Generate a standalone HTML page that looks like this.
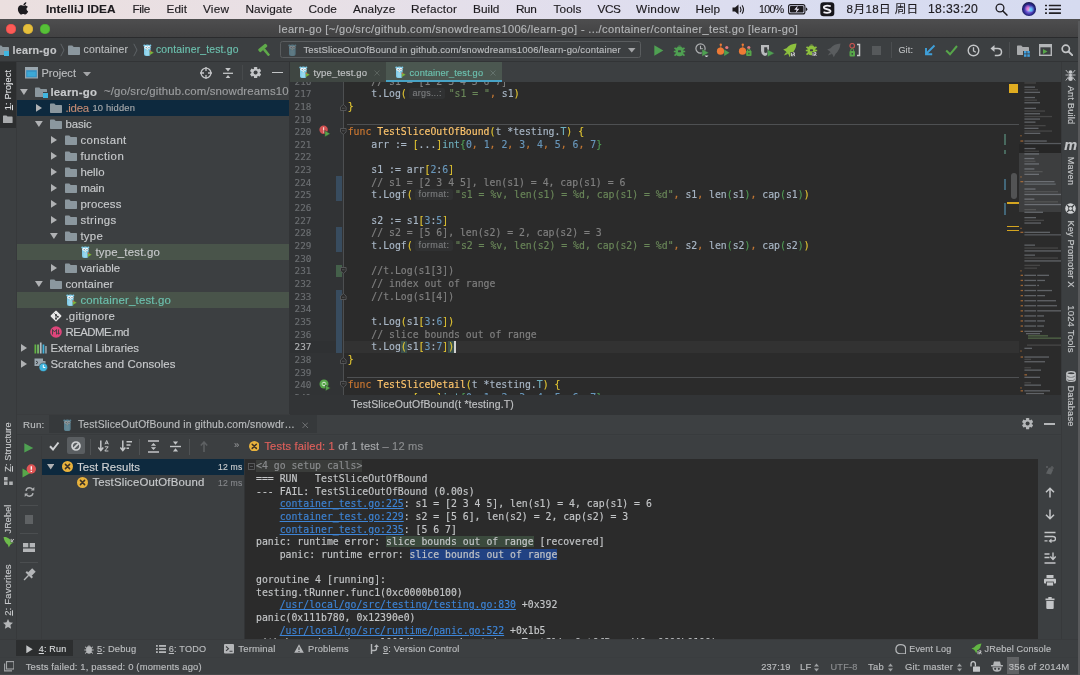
<!DOCTYPE html>
<html lang="en"><head><meta charset="utf-8"><title>learn-go - container_test.go</title>
<style>
html,body{margin:0;padding:0;}
body{width:1080px;height:675px;overflow:hidden;position:relative;background:#3c3f41;font-family:'Liberation Sans', 'Noto Sans CJK SC', sans-serif;-webkit-font-smoothing:antialiased;}
#app{position:absolute;left:0;top:0;width:1080px;height:675px;overflow:hidden;will-change:transform;}
#app div,#app span.t,#app svg{position:absolute;}
span.t{white-space:pre;-webkit-text-stroke:.15px currentColor;}
u{text-decoration:underline;text-underline-offset:1px;}
.lnk{color:#3d84d6;text-decoration:underline;}
</style></head><body><div id="app">
<div style="left:0px;top:0px;width:1080px;height:19px;background:linear-gradient(90deg,#ebdfdf 0%,#e8e0e6 30%,#e0deee 55%,#d8dcf0 80%,#d6dbf0 100%);"></div>
<svg style="left:17px;top:2px;" width="12" height="15" viewBox="0 0 12 15"><path d="M8.3 3.3c.6-.7 1-1.7.9-2.7-.9 0-1.9.6-2.5 1.300-.5.6-1 1.600-.9 2.600 1 .1 1.900-.5 2.500-1.200zM9.200 4.400c-1.400-.1-2.500.8-3.200.8s-1.700-.7-2.700-.7C1.800 4.500.6 5.300 0 6.600c-1.300 2.300-.3 5.700.900 7.500.6.900 1.400 1.900 2.300 1.900.900 0 1.300-.6 2.400-.6s1.400.6 2.400.6 1.600-.9 2.300-1.800c.7-1 1-2 1-2.100 0 0-1.900-.7-1.900-2.900 0-1.800 1.500-2.700 1.600-2.700-.9-1.300-2.200-1.400-2.700-1.500z" transform="translate(1.4,-0.3) scale(0.86,0.8)" fill="#1d1b1f"/></svg>
<span class="t" style="left:46px;top:1.90px;font-size:11.8px;line-height:15px;color:#1d1b1f;font-weight:700;letter-spacing:0.060px;">IntelliJ IDEA</span>
<span class="t" style="left:132.4px;top:1.90px;font-size:11.8px;line-height:15px;color:#1d1b1f;letter-spacing:-0.404px;">File</span>
<span class="t" style="left:166.6px;top:1.90px;font-size:11.8px;line-height:15px;color:#1d1b1f;letter-spacing:0.021px;">Edit</span>
<span class="t" style="left:203px;top:1.90px;font-size:11.8px;line-height:15px;color:#1d1b1f;letter-spacing:0.183px;">View</span>
<span class="t" style="left:245.4px;top:1.90px;font-size:11.8px;line-height:15px;color:#1d1b1f;letter-spacing:0.058px;">Navigate</span>
<span class="t" style="left:308.4px;top:1.90px;font-size:11.8px;line-height:15px;color:#1d1b1f;letter-spacing:0.113px;">Code</span>
<span class="t" style="left:353px;top:1.90px;font-size:11.8px;line-height:15px;color:#1d1b1f;letter-spacing:0.064px;">Analyze</span>
<span class="t" style="left:411px;top:1.90px;font-size:11.8px;line-height:15px;color:#1d1b1f;letter-spacing:0.188px;">Refactor</span>
<span class="t" style="left:473px;top:1.90px;font-size:11.8px;line-height:15px;color:#1d1b1f;letter-spacing:0.037px;">Build</span>
<span class="t" style="left:516px;top:1.90px;font-size:11.8px;line-height:15px;color:#1d1b1f;letter-spacing:-0.422px;">Run</span>
<span class="t" style="left:553.6px;top:1.90px;font-size:11.8px;line-height:15px;color:#1d1b1f;letter-spacing:0.056px;">Tools</span>
<span class="t" style="left:597.6px;top:1.90px;font-size:11.8px;line-height:15px;color:#1d1b1f;letter-spacing:-0.506px;">VCS</span>
<span class="t" style="left:636px;top:1.90px;font-size:11.8px;line-height:15px;color:#1d1b1f;letter-spacing:0.297px;">Window</span>
<span class="t" style="left:695.6px;top:1.90px;font-size:11.8px;line-height:15px;color:#1d1b1f;letter-spacing:0.038px;">Help</span>
<svg style="left:732px;top:3px;" width="15" height="13" viewBox="0 0 15 13"><path d="M0.500 4.500h2.500l3.500-3v10l-3.500-3h-2.500z" fill="#1d1b1f"/><path d="M8.300 4.200q1.300 2.300 0 4.600M10.300 2.700q2.300 3.800 0 7.600" fill="none" stroke="#1d1b1f" stroke-width="1.100" stroke-linecap="round"/></svg>
<span class="t" style="left:759px;top:2.40px;font-size:10.6px;line-height:14px;color:#1d1b1f;letter-spacing:-0.603px;">100%</span>
<svg style="left:788px;top:4px;" width="20" height="11" viewBox="0 0 20 11"><rect x="0.600" y="0.600" width="16.300" height="9.300" rx="2" fill="none" stroke="#1d1b1f" stroke-width="1.100"/><rect x="2" y="2" width="13.500" height="6.500" rx="0.800" fill="#1d1b1f"/><path d="M17.800 3.500v3.500q1.500-.3 1.500-1.750t-1.500-1.750z" fill="#1d1b1f"/><path d="M9.800 1.500l-3.600 4.200h2.400l-1 3.500 3.800-4.400h-2.500z" fill="#e4dfee"/></svg>
<svg style="left:820px;top:2px;" width="15" height="15" viewBox="0 0 15 15"><rect x="0.300" y="0.300" width="14" height="14" rx="3.200" fill="#17161b"/><path d="M10.800 4.300q-3.500-1.200-6.300-.1-1.400 1 0 2.200l5.300 1.700q1.600 1.100-.1 2.300-3.100.9-6.200-.3" fill="none" stroke="#f2f0f6" stroke-width="1.700"/></svg>
<span class="t" style="left:846.6px;top:1.00px;font-size:11.6px;line-height:15px;color:#1d1b1f;letter-spacing:0.380px;">8月18日 周日</span>
<span class="t" style="left:928px;top:1.40px;font-size:12.2px;line-height:16px;color:#1d1b1f;letter-spacing:0.340px;">18:33:20</span>
<svg style="left:995px;top:3px;" width="13" height="13" viewBox="0 0 13 13"><circle cx="5" cy="5" r="3.900" fill="none" stroke="#1d1b1f" stroke-width="1.300"/><path d="M7.900 7.900l4 4.200" stroke="#1d1b1f" stroke-width="1.500" stroke-linecap="round"/></svg>
<div style="left:1022px;top:2.300px;width:13.600px;height:13.600px;border-radius:50%;background:radial-gradient(circle at 50% 55%,#e8f6ff 0%,#8fb8f0 12%,#6a4fd0 30%,#2a2a8c 52%,#14123c 78%,#0c0b22 100%);"></div>
<div style="left:1024.500px;top:5px;width:5px;height:6px;border-radius:50%;background:radial-gradient(ellipse at 60% 60%,rgba(255,120,200,.9) 0%,rgba(255,120,200,.3) 55%,rgba(0,0,0,0) 100%);"></div>
<div style="left:1029px;top:5.500px;width:5px;height:6px;border-radius:50%;background:radial-gradient(ellipse at 40% 60%,rgba(90,220,255,.9) 0%,rgba(90,220,255,.3) 55%,rgba(0,0,0,0) 100%);"></div>
<svg style="left:1045px;top:4.3px;" width="17" height="11" viewBox="0 0 17 11"><g fill="#222024"><rect x="0" y="0.700" width="2" height="1.600" rx=".4"/><rect x="3.800" y="0.700" width="12.200" height="1.600" rx=".4"/><rect x="0" y="4.500" width="2" height="1.600" rx=".4"/><rect x="3.800" y="4.500" width="12.200" height="1.600" rx=".4"/><rect x="0" y="8.300" width="2" height="1.600" rx=".4"/><rect x="3.800" y="8.300" width="12.200" height="1.600" rx=".4"/></g></svg>
<div style="left:0px;top:19px;width:1080px;height:19px;background:linear-gradient(180deg,#4e4e4f 0%,#474748 50%,#424243 100%);"></div>
<div style="left:0px;top:37px;width:1080px;height:1px;background:#2a2b2d;"></div>
<div style="left:5.8px;top:23.5px;width:10.400px;height:10.400px;border-radius:50%;background:#fc5b57;box-shadow:inset 0 0 0 .5px #df4744;"></div>
<div style="left:22.6px;top:23.5px;width:10.400px;height:10.400px;border-radius:50%;background:#e5bf3c;box-shadow:inset 0 0 0 .5px #d1a730;"></div>
<div style="left:39.599999999999994px;top:23.5px;width:10.400px;height:10.400px;border-radius:50%;background:#57c038;box-shadow:inset 0 0 0 .5px #45a72c;"></div>
<span class="t" style="left:278.6px;top:22.30px;font-size:11px;line-height:14px;color:#b4b6b8;letter-spacing:0.366px;">learn-go [~/go/src/github.com/snowdreams1006/learn-go] - .../container/container_test.go [learn-go]</span>
<div style="left:0px;top:38px;width:1080px;height:23px;background:#3c3f41;"></div>
<div style="left:0px;top:61px;width:1080px;height:1px;background:#323436;"></div>
<svg style="left:-3px;top:44.5px;" width="12" height="10" viewBox="0 0 12 10"><path d="M0 1.200q0-.7.700-.7h3.600l1.400 1.500h5.600q.7 0 .700.700v6.600q0 .7-.700.700h-10.600q-.7 0-.700-.7z" fill="#8b979e"/></svg>
<div style="left:3.6px;top:50.6px;width:5.6px;height:5.6px;background:#3c3f41;"></div>
<div style="left:4.4px;top:51.4px;width:4.8px;height:4.8px;background:#40b6e0;"></div>
<span class="t" style="left:12.6px;top:43.20px;font-size:10.76px;line-height:14px;color:#c4c6c8;font-weight:700;letter-spacing:0.206px;">learn-go</span>
<svg style="left:60px;top:43.2px;" width="5" height="14" viewBox="0 0 5 14"><path d="M0.800 0.800l3.200 6.200-3.200 6.200" fill="none" stroke="#5e6366" stroke-width="1"/></svg>
<svg style="left:68px;top:44.5px;" width="12" height="10" viewBox="0 0 12 10"><path d="M0 1.200q0-.7.700-.7h3.600l1.400 1.500h5.600q.7 0 .700.700v6.600q0 .7-.700.700h-10.600q-.7 0-.700-.7z" fill="#8b979e"/></svg>
<span class="t" style="left:83.6px;top:43.20px;font-size:10.41px;line-height:14px;color:#bbbdbf;letter-spacing:0.185px;">container</span>
<svg style="left:133px;top:43.2px;" width="5" height="14" viewBox="0 0 5 14"><path d="M0.800 0.800l3.200 6.200-3.200 6.200" fill="none" stroke="#5e6366" stroke-width="1"/></svg>
<svg style="left:142.5px;top:43.5px;" width="11.5" height="12.5" viewBox="0 0 11.5 12.5"><g opacity="1.0"><path d="M1 3.600q0-3.100 3.300-3.100t3.300 3.100v6.300q0 2.200-3.300 2.200t-3.300-2.200z" fill="#7fcbe8"/><circle cx="1.300" cy="1.500" r="1" fill="#7fcbe8"/><circle cx="7.300" cy="1.500" r="1" fill="#7fcbe8"/><circle cx="2.900" cy="3.300" r="1.500" fill="#f4f8fa"/><circle cx="5.700" cy="3.300" r="1.500" fill="#f4f8fa"/><circle cx="3.200" cy="3.500" r=".5" fill="#3a5560"/><circle cx="6" cy="3.500" r=".5" fill="#3a5560"/><rect x="3.600" y="4.700" width="1.400" height="1.500" rx=".5" fill="#f0e6d0"/><path d="M2.400 6.500h3.800v4.500q-1.900.8-3.800 0z" fill="#a6e0f2" opacity=".6"/></g><path d="M6.800 6.300l4 2.400-4 2.400z" fill="#7cb83c" stroke="#4e5a3a" stroke-width=".3"/><path d="M6.800 6.300l1.500.9-1.500 1z" fill="#e2574c"/></svg>
<span class="t" style="left:156px;top:43.20px;font-size:10.39px;line-height:14px;color:#6cc0ae;letter-spacing:0.175px;">container_test.go</span>
<svg style="left:256.5px;top:42.5px;" width="15" height="14" viewBox="0 0 15 14"><g transform="rotate(-40 7.500 7)"><rect x="2.500" y="2.500" width="10" height="3.600" rx="1" fill="#5faa4a"/><rect x="6.300" y="5.800" width="2.500" height="8.500" rx=".8" fill="#5faa4a"/></g></svg>
<div style="left:280px;top:40.500px;width:361px;height:17.500px;border:1px solid #5a5d5f;border-radius:2.500px;box-sizing:border-box;background:#3c3f41;"></div>
<svg style="left:288px;top:43.5px;" width="11.5" height="12.5" viewBox="0 0 11.5 12.5"><g opacity="0.38"><path d="M1 3.600q0-3.100 3.300-3.100t3.300 3.100v6.300q0 2.200-3.300 2.200t-3.300-2.200z" fill="#7fcbe8"/><circle cx="1.300" cy="1.500" r="1" fill="#7fcbe8"/><circle cx="7.300" cy="1.500" r="1" fill="#7fcbe8"/><circle cx="2.900" cy="3.300" r="1.500" fill="#f4f8fa"/><circle cx="5.700" cy="3.300" r="1.500" fill="#f4f8fa"/><circle cx="3.200" cy="3.500" r=".5" fill="#3a5560"/><circle cx="6" cy="3.500" r=".5" fill="#3a5560"/><rect x="3.600" y="4.700" width="1.400" height="1.500" rx=".5" fill="#f0e6d0"/><path d="M2.400 6.500h3.800v4.500q-1.900.8-3.800 0z" fill="#a6e0f2" opacity=".6"/></g></svg>
<span class="t" style="left:303.4px;top:43.20px;font-size:9.49px;line-height:14px;color:#bbbdbf;letter-spacing:0.167px;">TestSliceOutOfBound in github.com/snowdreams1006/learn-go/container</span>
<svg style="left:628px;top:48.2px;" width="7.5" height="4.6" viewBox="0 0 7.5 4.6"><path d="M0 0h7.5l-3.75 4.6z" fill="#a3a5a7"/></svg>
<svg style="left:653.5px;top:45px;" width="10" height="11" viewBox="0 0 10 11"><path d="M0.300 0.300l9 5.200-9 5.200z" fill="#4fa052"/></svg>
<svg style="left:673.2px;top:43.5px;" width="13.0" height="13.0" viewBox="0 0 13 13"><g fill="#4fa052"><rect x="2.600" y="2.800" width="7.800" height="9.400" rx="3.600"/><path d="M4.200 2.600q2.300-2.400 4.600 0z"/></g><g stroke="#4fa052" stroke-width="1.700" fill="none"><path d="M0.800 7.500h11.400M1.500 3.800l2 1.600M11.500 3.800l-2 1.600M1.500 11.600l2-1.600M11.500 11.600l-2-1.600"/></g><rect x="5" y="6.300" width="3" height="2" rx=".4" fill="#3c3f41"/></svg>
<svg style="left:695px;top:43px;" width="15" height="14" viewBox="0 0 15 14"><circle cx="5.500" cy="5.500" r="4.600" fill="none" stroke="#afb1b3" stroke-width="1.200"/><path d="M5.500 2.800v3h2.500" fill="none" stroke="#afb1b3" stroke-width="1.100"/><path d="M7 6l7 3.800-7 3.800z" fill="#4fa052" stroke="#3c3f41" stroke-width=".5"/><path d="M9.500 12.500h4l-2 2z" fill="#d0d2d4"/></svg>
<svg style="left:716px;top:43px;" width="14" height="14" viewBox="0 0 14 14"><circle cx="4.500" cy="8.200" r="3.600" fill="#ee7a35"/><circle cx="4.800" cy="1.800" r="1.200" fill="#ee7a35"/><path d="M4.800 2.500v2.500" stroke="#ee7a35" stroke-width=".8"/><circle cx="10.800" cy="4.500" r="1.600" fill="#e2777a"/><path d="M8.200 6.500l5.300 3.200-5.300 3.200z" fill="#4fa052"/></svg>
<svg style="left:738px;top:43px;" width="14" height="14" viewBox="0 0 14 14"><circle cx="4.500" cy="8.200" r="3.600" fill="#ee7a35"/><circle cx="4.800" cy="1.800" r="1.200" fill="#ee7a35"/><path d="M4.800 2.500v2.500" stroke="#ee7a35" stroke-width=".8"/><circle cx="10.800" cy="4.500" r="1.600" fill="#e2777a"/><rect x="8.200" y="7.800" width="5.300" height="5.200" rx=".8" fill="#57a64a"/><path d="M9.500 8v-1.200q1.350-1.500 2.700 0v1.200" fill="none" stroke="#57a64a" stroke-width="1"/><rect x="10.300" y="9.800" width="1.200" height="1.500" fill="#3c3f41"/></svg>
<svg style="left:760px;top:43.5px;" width="15" height="13" viewBox="0 0 15 13"><path d="M1 1h8v6q0 3.500-4 5-4-1.500-4-5z" fill="#b8babc"/><path d="M4.200 3.200h3v5q-1.500 1.500-3 0z" fill="#3c3f41"/><path d="M7.500 5.500l7 3.700-7 3.700z" fill="#4fa052" stroke="#3c3f41" stroke-width=".5"/></svg>
<svg style="left:783px;top:43px;" width="14" height="14" viewBox="0 0 14 14"><path d="M13.500 0.500q-6.500 .3-10 4.800l-3.300 1.200 2.800 2 .8 1.800 1.600 1 1.400 3 1.800-3.500q4.300-3.800 4.900-10.300z" fill="#8dc03e"/><path d="M0.800 12.500l2.300-3.300 1.700 1.700z" fill="#8dc03e"/><rect x="7.500" y="9" width="6" height="5" fill="#3c3f41"/><path d="M8.500 9.800v3.400M9.800 9.800h1.600v1.500h-1.600v2M11.800 13.200l-.9-1.900" stroke="#e6e6e6" stroke-width=".8" fill="none"/></svg>
<svg style="left:804.5px;top:42.5px;" width="13.0" height="13.0" viewBox="0 0 13 13"><g fill="#8dc03e"><rect x="2.600" y="2.800" width="7.800" height="9.400" rx="3.600"/><path d="M4.200 2.600q2.300-2.400 4.600 0z"/></g><g stroke="#8dc03e" stroke-width="1.700" fill="none"><path d="M0.800 7.500h11.400M1.500 3.800l2 1.600M11.500 3.800l-2 1.600M1.500 11.600l2-1.600M11.500 11.600l-2-1.600"/></g><rect x="5" y="6.300" width="3" height="2" rx=".4" fill="#3c3f41"/></svg>
<div style="left:812px;top:52px;width:6px;height:5px;background:#3c3f41;"></div>
<svg style="left:812px;top:52px;" width="6" height="5" viewBox="0 0 6 5"><path d="M1 .5v3.400M2.300 .5h1.600v1.500h-1.600v2M4.300 4l-.9-1.900" stroke="#e6e6e6" stroke-width=".8" fill="none"/></svg>
<svg style="left:827px;top:43px;" width="14" height="14" viewBox="0 0 14 14"><path d="M13.500 0.500q-6.500 .3-10 4.800l-3.300 1.200 2.800 2 .8 1.800 1.600 1 1.400 3 1.800-3.500q4.300-3.800 4.900-10.300z" fill="#5a5d5f"/><path d="M0.800 12.500l2.300-3.300 1.700 1.700z" fill="#5a5d5f"/></svg>
<svg style="left:849px;top:43px;" width="12" height="14" viewBox="0 0 12 14"><circle cx="3.200" cy="2.800" r="2.300" fill="none" stroke="#c75450" stroke-width="1.200"/><rect x="0.500" y="8" width="5.500" height="5.500" rx="1" fill="#57a64a"/><path d="M1.800 8v-1.500q1.400-1.600 2.800 0v1.500" fill="none" stroke="#57a64a" stroke-width="1"/><rect x="2.600" y="10" width="1.300" height="1.700" fill="#3c3f41"/><path d="M8 1.500h2.500v11h-2.500" fill="none" stroke="#c9cbcd" stroke-width="1.500"/></svg>
<div style="left:872px;top:45.5px;width:9px;height:9px;background:#56595b;"></div>
<div style="left:890.5px;top:42px;width:1px;height:16px;background:#4b4e50;"></div>
<span class="t" style="left:898.4px;top:43.20px;font-size:9.05px;line-height:14px;color:#bbbdbf;letter-spacing:0.147px;">Git:</span>
<svg style="left:924px;top:44px;" width="12" height="12" viewBox="0 0 12 12"><path d="M10.500 1.500l-8 8M2 4v6.200h6.200" fill="none" stroke="#3f9fd8" stroke-width="1.900"/></svg>
<svg style="left:945px;top:44px;" width="13" height="12" viewBox="0 0 13 12"><path d="M1.200 6.500l3.800 3.800 7-8.300" fill="none" stroke="#57a64a" stroke-width="2"/></svg>
<svg style="left:966.5px;top:43.5px;" width="13" height="13" viewBox="0 0 13 13"><circle cx="6.500" cy="6.500" r="5.300" fill="none" stroke="#c3c5c7" stroke-width="1.400"/><path d="M6.500 3.300v3.500l2.300 1.400" fill="none" stroke="#c3c5c7" stroke-width="1.300"/></svg>
<svg style="left:989.5px;top:43.5px;" width="13" height="13" viewBox="0 0 13 13"><path d="M3 4.500h4.800q3.700 0 3.700 3.500t-3.700 3.500h-3" fill="none" stroke="#c3c5c7" stroke-width="1.500"/><path d="M0.500 4.500l4-3.500v7z" fill="#c3c5c7"/></svg>
<div style="left:1008.5px;top:42px;width:1px;height:16px;background:#4b4e50;"></div>
<svg style="left:1016.5px;top:44.5px;" width="12" height="10" viewBox="0 0 12 10"><path d="M0 1.200q0-.7.700-.7h3.600l1.400 1.500h5.600q.7 0 .700.700v6.600q0 .7-.700.700h-10.600q-.7 0-.700-.7z" fill="#a9abad"/></svg>
<div style="left:1023px;top:50.5px;width:7px;height:7px;background:#3c3f41;"></div>
<svg style="left:1023.5px;top:51px;" width="6" height="6" viewBox="0 0 6 6"><rect x="0" y="0" width="2.500" height="2.500" fill="#40a0e0"/><rect x="3.300" y="0" width="2.500" height="2.500" fill="#40a0e0"/><rect x="0" y="3.300" width="2.500" height="2.500" fill="#40a0e0"/><rect x="3.300" y="3.300" width="2.500" height="2.500" fill="#40a0e0"/></svg>
<svg style="left:1038.5px;top:44px;" width="13" height="12" viewBox="0 0 13 12"><rect x="0.700" y="0.700" width="11.600" height="10.600" fill="none" stroke="#b4b6b8" stroke-width="1.400"/><rect x="0.700" y="0.700" width="11.600" height="2.600" fill="#b4b6b8"/><path d="M4 5l4.500 2.500-4.500 2.500z" fill="#57a64a"/></svg>
<svg style="left:1061px;top:44px;" width="12" height="12" viewBox="0 0 12 12"><circle cx="4.800" cy="4.800" r="3.600" fill="none" stroke="#c3c5c7" stroke-width="1.700"/><path d="M7.500 7.500l3.700 3.700" stroke="#c3c5c7" stroke-width="1.900" stroke-linecap="round"/></svg>
<div style="left:0px;top:62px;width:16px;height:577px;background:#3c3f41;"></div>
<div style="left:16px;top:62px;width:1px;height:577px;background:#37393b;"></div>
<div style="left:0px;top:62px;width:16px;height:66px;background:#2c2e2f;"></div>
<span class="t" style="left:8px;top:89.8px;font-size:9.23px;line-height:14px;color:#dcdee0;letter-spacing:0.148px;transform:translate(-50%,-50%) rotate(-90deg);"><u>1</u>: Project</span>
<svg style="left:3.2px;top:114.5px;" width="9.6" height="8" viewBox="0 0 12 10"><path d="M0 1.200q0-.7.700-.7h3.600l1.400 1.500h5.600q.7 0 .700.700v6.600q0 .7-.700.700h-10.600q-.7 0-.700-.7z" fill="#a9abad"/></svg>
<span class="t" style="left:8px;top:447.3px;font-size:9.12px;line-height:14px;color:#c6c8ca;letter-spacing:0.152px;transform:translate(-50%,-50%) rotate(-90deg);"><u>Z</u>: Structure</span>
<svg style="left:3.5px;top:477px;" width="9" height="8" viewBox="0 0 9 8"><rect x="0" y="4.500" width="3.600" height="3.500" fill="#afb1b3"/><rect x="5.200" y="4.500" width="3.600" height="3.500" fill="#afb1b3"/><rect x="0" y="0" width="3.600" height="3.500" fill="#afb1b3"/></svg>
<span class="t" style="left:8px;top:519px;font-size:8.96px;line-height:14px;color:#c6c8ca;letter-spacing:0.181px;transform:translate(-50%,-50%) rotate(-90deg);">JRebel</span>
<svg style="left:2.5px;top:535.5px;" width="12" height="12" viewBox="0 0 12 12"><g transform="rotate(-90 6 6)"><path d="M11.500 0.500q-5.500 .5-8.200 4.400l-2.800.9 2.800 1.500 1.100 1.400 1.300 2.600 1.300-2.800q3.900-3 4.500-8z" fill="#6dbb4b"/><path d="M5.500 7.500h5v4h-5z" fill="#3c3f41"/><path d="M6.300 8.200h2.800M6.300 9.400h1.400l1 1.600M6.300 9.400v-1.200" stroke="#e6e6e6" stroke-width=".8" fill="none"/></g></svg>
<span class="t" style="left:8px;top:590px;font-size:9.49px;line-height:14px;color:#c6c8ca;letter-spacing:0.158px;transform:translate(-50%,-50%) rotate(-90deg);"><u>2</u>: Favorites</span>
<svg style="left:3px;top:618.5px;" width="10" height="10" viewBox="0 0 10 10"><path d="M5 0l1.500 3.300 3.500.4-2.600 2.400.7 3.600-3.100-1.800-3.100 1.800.7-3.600-2.600-2.400 3.500-.4z" fill="#b4b6b8"/></svg>
<div style="left:17px;top:62px;width:272px;height:352.5px;background:#3c3f41;"></div>
<div style="left:289px;top:62px;width:1px;height:352.5px;background:#323436;"></div>
<svg style="left:25px;top:67px;" width="13" height="11.5" viewBox="0 0 13 11.5"><rect x="0.600" y="0.600" width="11.800" height="10.300" fill="#3592c4" stroke="#9aa7b0" stroke-width="1.200"/><rect x="0.600" y="0.600" width="11.800" height="2.600" fill="#9aa7b0"/><rect x="2.300" y="4.800" width="8.400" height="4.600" fill="#40b6e0" opacity=".65"/></svg>
<span class="t" style="left:41.4px;top:66.40px;font-size:11px;line-height:14px;color:#bbbdbf;letter-spacing:0.054px;">Project</span>
<svg style="left:83px;top:71.7px;" width="8" height="4.6" viewBox="0 0 8 4.6"><path d="M0 0h8l-4.0 4.6z" fill="#a3a5a7"/></svg>
<svg style="left:200px;top:66.7px;" width="12" height="12" viewBox="0 0 12 12"><circle cx="6" cy="6" r="4.900" fill="none" stroke="#c3c5c7" stroke-width="1.300"/><path d="M6 0v4M6 8v4M0 6h4M8 6h4" stroke="#c3c5c7" stroke-width="1.300"/></svg>
<svg style="left:223px;top:67.5px;" width="10" height="10.6" viewBox="0 0 10 10.6"><path d="M0 5.300h10" stroke="#c3c5c7" stroke-width="1.300"/><path d="M2.200 0h5.600l-2.800 3.600zM2.200 10.600h5.600l-2.800-3.600z" fill="#c3c5c7"/></svg>
<div style="left:241.5px;top:65px;width:1px;height:15px;background:#474a4c;"></div>
<svg style="left:249.9px;top:67.0px;" width="11.2" height="11.2" viewBox="0 0 11.2 11.2"><g transform="translate(5.6,5.6)" fill="#c3c5c7"><rect x="-1.600" y="-5.6" width="3.200" height="11.2" rx=".5" transform="rotate(0)"/><rect x="-1.600" y="-5.6" width="3.200" height="11.2" rx=".5" transform="rotate(60)"/><rect x="-1.600" y="-5.6" width="3.200" height="11.2" rx=".5" transform="rotate(120)"/><circle r="4.144"/></g><circle cx="5.6" cy="5.6" r="2.016" fill="#3c3f41"/></svg>
<div style="left:272px;top:71.7px;width:11px;height:1.5px;background:#c3c5c7;"></div>
<div style="left:17px;top:100px;width:272px;height:16px;background:#0d293e;"></div>
<div style="left:17px;top:244px;width:272px;height:16px;background:#49544a;"></div>
<div style="left:17px;top:292px;width:272px;height:16px;background:#49544a;"></div>
<svg style="left:19.8px;top:89.2px;" width="7.8" height="6" viewBox="0 0 7.8 6"><path d="M0 0h7.8l-3.9 6z" fill="#b0b2b4"/></svg>
<svg style="left:35px;top:86.8px;" width="12" height="10" viewBox="0 0 12 10"><path d="M0 1.200q0-.7.700-.7h3.600l1.400 1.500h5.600q.7 0 .700.700v6.600q0 .7-.700.700h-10.600q-.7 0-.700-.7z" fill="#8b979e"/></svg>
<div style="left:42.5px;top:92.3px;width:5.5px;height:5.5px;background:#3c3f41;"></div>
<div style="left:43.3px;top:93.1px;width:4.7px;height:4.7px;background:#40b6e0;"></div>
<span class="t" style="left:50.4px;top:84.70px;font-size:11.4px;line-height:15px;color:#c8cacc;font-weight:700;letter-spacing:0.222px;">learn-go</span>
<span class="t" style="left:104px;top:84.30px;font-size:11.4px;line-height:15px;color:#9c9ea0;letter-spacing:0.142px;">~/go/src/github.com/snowdreams10</span>
<svg style="left:35.5px;top:104.3px;" width="6" height="7.8" viewBox="0 0 6 7.8"><path d="M0 0l6 3.9-6 3.9z" fill="#b0b2b4"/></svg>
<svg style="left:50px;top:102.8px;" width="12" height="10" viewBox="0 0 12 10"><path d="M0 1.200q0-.7.700-.7h3.600l1.400 1.500h5.600q.7 0 .700.700v6.600q0 .7-.700.700h-10.600q-.7 0-.700-.7z" fill="#8b979e"/></svg>
<span class="t" style="left:65.4px;top:100.70px;font-size:11.4px;line-height:15px;color:#c28a72;letter-spacing:-0.245px;">.idea</span>
<span class="t" style="left:92.4px;top:101.20px;font-size:9.36px;line-height:14px;color:#a6a8aa;letter-spacing:0.173px;">10 hidden</span>
<svg style="left:34.8px;top:121.2px;" width="7.8" height="6" viewBox="0 0 7.8 6"><path d="M0 0h7.8l-3.9 6z" fill="#b0b2b4"/></svg>
<svg style="left:50px;top:118.8px;" width="12" height="10" viewBox="0 0 12 10"><path d="M0 1.200q0-.7.700-.7h3.600l1.400 1.500h5.600q.7 0 .700.700v6.600q0 .7-.700.700h-10.600q-.7 0-.700-.7z" fill="#8b979e"/></svg>
<span class="t" style="left:65.4px;top:116.70px;font-size:11.4px;line-height:15px;color:#c8cacc;letter-spacing:-0.065px;">basic</span>
<svg style="left:50.5px;top:136.29999999999998px;" width="6" height="7.8" viewBox="0 0 6 7.8"><path d="M0 0l6 3.9-6 3.9z" fill="#b0b2b4"/></svg>
<svg style="left:65px;top:134.8px;" width="12" height="10" viewBox="0 0 12 10"><path d="M0 1.200q0-.7.700-.7h3.600l1.400 1.500h5.600q.7 0 .700.700v6.600q0 .7-.700.700h-10.600q-.7 0-.700-.7z" fill="#8b979e"/></svg>
<span class="t" style="left:80.4px;top:132.70px;font-size:11.4px;line-height:15px;color:#c8cacc;letter-spacing:0.405px;">constant</span>
<svg style="left:50.5px;top:152.29999999999998px;" width="6" height="7.8" viewBox="0 0 6 7.8"><path d="M0 0l6 3.9-6 3.9z" fill="#b0b2b4"/></svg>
<svg style="left:65px;top:150.8px;" width="12" height="10" viewBox="0 0 12 10"><path d="M0 1.200q0-.7.700-.7h3.600l1.400 1.500h5.600q.7 0 .700.700v6.600q0 .7-.700.700h-10.600q-.7 0-.700-.7z" fill="#8b979e"/></svg>
<span class="t" style="left:80.4px;top:148.70px;font-size:11.4px;line-height:15px;color:#c8cacc;letter-spacing:0.492px;">function</span>
<svg style="left:50.5px;top:168.29999999999998px;" width="6" height="7.8" viewBox="0 0 6 7.8"><path d="M0 0l6 3.9-6 3.9z" fill="#b0b2b4"/></svg>
<svg style="left:65px;top:166.8px;" width="12" height="10" viewBox="0 0 12 10"><path d="M0 1.200q0-.7.700-.7h3.600l1.400 1.500h5.600q.7 0 .700.700v6.600q0 .7-.700.700h-10.600q-.7 0-.700-.7z" fill="#8b979e"/></svg>
<span class="t" style="left:80.4px;top:164.70px;font-size:11.4px;line-height:15px;color:#c8cacc;letter-spacing:0.005px;">hello</span>
<svg style="left:50.5px;top:184.29999999999998px;" width="6" height="7.8" viewBox="0 0 6 7.8"><path d="M0 0l6 3.9-6 3.9z" fill="#b0b2b4"/></svg>
<svg style="left:65px;top:182.8px;" width="12" height="10" viewBox="0 0 12 10"><path d="M0 1.200q0-.7.700-.7h3.600l1.400 1.500h5.600q.7 0 .700.700v6.600q0 .7-.700.700h-10.600q-.7 0-.700-.7z" fill="#8b979e"/></svg>
<span class="t" style="left:80.4px;top:180.70px;font-size:11.4px;line-height:15px;color:#c8cacc;letter-spacing:-0.172px;">main</span>
<svg style="left:50.5px;top:200.29999999999998px;" width="6" height="7.8" viewBox="0 0 6 7.8"><path d="M0 0l6 3.9-6 3.9z" fill="#b0b2b4"/></svg>
<svg style="left:65px;top:198.8px;" width="12" height="10" viewBox="0 0 12 10"><path d="M0 1.200q0-.7.700-.7h3.600l1.400 1.500h5.600q.7 0 .700.700v6.600q0 .7-.700.700h-10.600q-.7 0-.700-.7z" fill="#8b979e"/></svg>
<span class="t" style="left:80.4px;top:196.70px;font-size:11.4px;line-height:15px;color:#c8cacc;letter-spacing:0.186px;">process</span>
<svg style="left:50.5px;top:216.29999999999998px;" width="6" height="7.8" viewBox="0 0 6 7.8"><path d="M0 0l6 3.9-6 3.9z" fill="#b0b2b4"/></svg>
<svg style="left:65px;top:214.8px;" width="12" height="10" viewBox="0 0 12 10"><path d="M0 1.200q0-.7.700-.7h3.600l1.400 1.500h5.600q.7 0 .700.700v6.600q0 .7-.700.700h-10.600q-.7 0-.700-.7z" fill="#8b979e"/></svg>
<span class="t" style="left:80.4px;top:212.70px;font-size:11.4px;line-height:15px;color:#c8cacc;letter-spacing:0.390px;">strings</span>
<svg style="left:49.8px;top:233.2px;" width="7.8" height="6" viewBox="0 0 7.8 6"><path d="M0 0h7.8l-3.9 6z" fill="#b0b2b4"/></svg>
<svg style="left:65px;top:230.8px;" width="12" height="10" viewBox="0 0 12 10"><path d="M0 1.200q0-.7.700-.7h3.600l1.400 1.500h5.600q.7 0 .700.700v6.600q0 .7-.700.700h-10.600q-.7 0-.700-.7z" fill="#8b979e"/></svg>
<span class="t" style="left:80.4px;top:228.70px;font-size:11.4px;line-height:15px;color:#c8cacc;letter-spacing:0.305px;">type</span>
<svg style="left:81px;top:245.8px;" width="11.5" height="12.5" viewBox="0 0 11.5 12.5"><g opacity="1.0"><path d="M1 3.600q0-3.100 3.300-3.100t3.300 3.100v6.300q0 2.200-3.300 2.200t-3.300-2.200z" fill="#7fcbe8"/><circle cx="1.300" cy="1.500" r="1" fill="#7fcbe8"/><circle cx="7.300" cy="1.500" r="1" fill="#7fcbe8"/><circle cx="2.900" cy="3.300" r="1.500" fill="#f4f8fa"/><circle cx="5.700" cy="3.300" r="1.500" fill="#f4f8fa"/><circle cx="3.200" cy="3.500" r=".5" fill="#3a5560"/><circle cx="6" cy="3.500" r=".5" fill="#3a5560"/><rect x="3.600" y="4.700" width="1.400" height="1.500" rx=".5" fill="#f0e6d0"/><path d="M2.400 6.500h3.800v4.500q-1.900.8-3.800 0z" fill="#a6e0f2" opacity=".6"/></g><path d="M6.800 6.300l4 2.400-4 2.400z" fill="#7cb83c" stroke="#4e5a3a" stroke-width=".3"/><path d="M6.800 6.300l1.500.9-1.500 1z" fill="#e2574c"/></svg>
<span class="t" style="left:95.4px;top:244.70px;font-size:11.4px;line-height:15px;color:#c8cacc;letter-spacing:0.221px;">type_test.go</span>
<svg style="left:50.5px;top:264.3px;" width="6" height="7.8" viewBox="0 0 6 7.8"><path d="M0 0l6 3.9-6 3.9z" fill="#b0b2b4"/></svg>
<svg style="left:65px;top:262.8px;" width="12" height="10" viewBox="0 0 12 10"><path d="M0 1.200q0-.7.700-.7h3.600l1.400 1.500h5.600q.7 0 .700.700v6.600q0 .7-.700.700h-10.600q-.7 0-.700-.7z" fill="#8b979e"/></svg>
<span class="t" style="left:80.4px;top:260.70px;font-size:11.4px;line-height:15px;color:#c8cacc;letter-spacing:-0.039px;">variable</span>
<svg style="left:34.8px;top:281.2px;" width="7.8" height="6" viewBox="0 0 7.8 6"><path d="M0 0h7.8l-3.9 6z" fill="#b0b2b4"/></svg>
<svg style="left:50px;top:278.8px;" width="12" height="10" viewBox="0 0 12 10"><path d="M0 1.200q0-.7.700-.7h3.600l1.400 1.500h5.600q.7 0 .700.700v6.600q0 .7-.700.700h-10.600q-.7 0-.700-.7z" fill="#8b979e"/></svg>
<span class="t" style="left:65.4px;top:276.70px;font-size:11.4px;line-height:15px;color:#c8cacc;letter-spacing:0.146px;">container</span>
<svg style="left:66px;top:293.8px;" width="11.5" height="12.5" viewBox="0 0 11.5 12.5"><g opacity="1.0"><path d="M1 3.600q0-3.100 3.300-3.100t3.300 3.100v6.300q0 2.200-3.300 2.200t-3.300-2.200z" fill="#7fcbe8"/><circle cx="1.300" cy="1.500" r="1" fill="#7fcbe8"/><circle cx="7.300" cy="1.500" r="1" fill="#7fcbe8"/><circle cx="2.900" cy="3.300" r="1.500" fill="#f4f8fa"/><circle cx="5.700" cy="3.300" r="1.500" fill="#f4f8fa"/><circle cx="3.200" cy="3.500" r=".5" fill="#3a5560"/><circle cx="6" cy="3.500" r=".5" fill="#3a5560"/><rect x="3.600" y="4.700" width="1.400" height="1.500" rx=".5" fill="#f0e6d0"/><path d="M2.400 6.500h3.800v4.500q-1.900.8-3.800 0z" fill="#a6e0f2" opacity=".6"/></g><path d="M6.800 6.300l4 2.400-4 2.400z" fill="#7cb83c" stroke="#4e5a3a" stroke-width=".3"/><path d="M6.800 6.300l1.500.9-1.500 1z" fill="#e2574c"/></svg>
<span class="t" style="left:80.4px;top:292.70px;font-size:11.4px;line-height:15px;color:#6cc0ae;letter-spacing:0.195px;">container_test.go</span>
<svg style="left:49.5px;top:310px;" width="12" height="12" viewBox="0 0 12 12"><rect x="1.900" y="1.900" width="8.200" height="8.200" rx="1" transform="rotate(45 6 6)" fill="#e8e8e8"/><path d="M4.500 3.500l3.200 3.200M6 5v4" stroke="#3c3f41" stroke-width="1" fill="none"/><circle cx="6" cy="4.900" r="1" fill="#3c3f41"/><circle cx="7.800" cy="6.700" r="1" fill="#3c3f41"/><circle cx="6" cy="8.700" r="1" fill="#3c3f41"/></svg>
<span class="t" style="left:65.4px;top:308.70px;font-size:11.4px;line-height:15px;color:#c8cacc;letter-spacing:0.288px;">.gitignore</span>
<svg style="left:49.5px;top:326px;" width="12" height="12" viewBox="0 0 12 12"><circle cx="6" cy="6" r="5.800" fill="#e0457b"/><path d="M2.500 8.500v-5l2 2.500 2-2.500v5M8.500 3.500v4.500M7.300 6.800l1.200 1.500 1.200-1.500" fill="none" stroke="#3c3f41" stroke-width=".9"/></svg>
<span class="t" style="left:65.4px;top:324.70px;font-size:11.4px;line-height:15px;color:#c8cacc;letter-spacing:-0.486px;">README.md</span>
<svg style="left:20.5px;top:344.3px;" width="6" height="7.8" viewBox="0 0 6 7.8"><path d="M0 0l6 3.9-6 3.9z" fill="#b0b2b4"/></svg>
<svg style="left:34px;top:342px;" width="13" height="12" viewBox="0 0 13 12"><rect x="0.500" y="2.500" width="1.700" height="9" fill="#62b543"/><rect x="3.200" y="2.500" width="1.700" height="9" fill="#7cc06a"/><rect x="5.900" y="0.500" width="1.700" height="11" fill="#b4bcc2"/><rect x="8.600" y="2.500" width="1.700" height="9" fill="#40b6e0"/><rect x="11.200" y="4" width="1.500" height="7.500" fill="#9aa7b0"/></svg>
<span class="t" style="left:50.4px;top:340.70px;font-size:11.4px;line-height:15px;color:#c8cacc;letter-spacing:-0.002px;">External Libraries</span>
<svg style="left:20.5px;top:360.3px;" width="6" height="7.8" viewBox="0 0 6 7.8"><path d="M0 0l6 3.9-6 3.9z" fill="#b0b2b4"/></svg>
<svg style="left:34px;top:357.5px;" width="14" height="14" viewBox="0 0 14 14"><path d="M0.500 0.500h8.500v2.500h2.500v5h-11z" fill="#9aa7b0"/><path d="M2 3l2 1.500-2 1.500" fill="none" stroke="#3c3f41" stroke-width="1"/><circle cx="9.300" cy="9.300" r="4.300" fill="#40b6e0" stroke="#3c3f41" stroke-width=".6"/><path d="M9.300 6.800v2.700h2" fill="none" stroke="#ffffff" stroke-width="1"/></svg>
<span class="t" style="left:50.4px;top:356.70px;font-size:11.4px;line-height:15px;color:#c8cacc;letter-spacing:0.076px;">Scratches and Consoles</span>
<div style="left:290px;top:62px;width:771px;height:21px;background:#3c3f41;"></div>
<div style="left:290px;top:82px;width:771px;height:0.5px;background:#323436;"></div>
<div style="left:290px;top:62px;width:95.5px;height:20.5px;background:#3f4642;"></div>
<div style="left:385.5px;top:62px;width:116.5px;height:21px;background:#4b5750;"></div>
<div style="left:385.5px;top:79.8px;width:116.5px;height:3px;background:#48a3c6;"></div>
<svg style="left:299px;top:66.3px;" width="11.5" height="12.5" viewBox="0 0 11.5 12.5"><g opacity="1.0"><path d="M1 3.600q0-3.100 3.300-3.100t3.300 3.100v6.300q0 2.200-3.300 2.200t-3.300-2.200z" fill="#7fcbe8"/><circle cx="1.300" cy="1.500" r="1" fill="#7fcbe8"/><circle cx="7.300" cy="1.500" r="1" fill="#7fcbe8"/><circle cx="2.900" cy="3.300" r="1.500" fill="#f4f8fa"/><circle cx="5.700" cy="3.300" r="1.500" fill="#f4f8fa"/><circle cx="3.200" cy="3.500" r=".5" fill="#3a5560"/><circle cx="6" cy="3.500" r=".5" fill="#3a5560"/><rect x="3.600" y="4.700" width="1.400" height="1.500" rx=".5" fill="#f0e6d0"/><path d="M2.400 6.500h3.800v4.500q-1.900.8-3.800 0z" fill="#a6e0f2" opacity=".6"/></g><path d="M6.800 6.300l4 2.400-4 2.400z" fill="#7cb83c" stroke="#4e5a3a" stroke-width=".3"/><path d="M6.800 6.300l1.500.9-1.500 1z" fill="#e2574c"/></svg>
<span class="t" style="left:313.4px;top:65.80px;font-size:9.53px;line-height:14px;color:#c0c2c4;letter-spacing:0.163px;">type_test.go</span>
<svg style="left:373.5px;top:69.8px;" width="6" height="6" viewBox="0 0 6 6"><path d="M0.500 0.500l5 5M5.500 0.500l-5 5" stroke="#5d6561" stroke-width=".9"/></svg>
<svg style="left:395.3px;top:66.3px;" width="11.5" height="12.5" viewBox="0 0 11.5 12.5"><g opacity="1.0"><path d="M1 3.600q0-3.100 3.300-3.100t3.300 3.100v6.300q0 2.200-3.300 2.200t-3.300-2.200z" fill="#7fcbe8"/><circle cx="1.300" cy="1.500" r="1" fill="#7fcbe8"/><circle cx="7.300" cy="1.500" r="1" fill="#7fcbe8"/><circle cx="2.900" cy="3.300" r="1.500" fill="#f4f8fa"/><circle cx="5.700" cy="3.300" r="1.500" fill="#f4f8fa"/><circle cx="3.200" cy="3.500" r=".5" fill="#3a5560"/><circle cx="6" cy="3.500" r=".5" fill="#3a5560"/><rect x="3.600" y="4.700" width="1.400" height="1.500" rx=".5" fill="#f0e6d0"/><path d="M2.400 6.500h3.800v4.500q-1.900.8-3.800 0z" fill="#a6e0f2" opacity=".6"/></g><path d="M6.800 6.300l4 2.400-4 2.400z" fill="#7cb83c" stroke="#4e5a3a" stroke-width=".3"/><path d="M6.800 6.300l1.500.9-1.500 1z" fill="#e2574c"/></svg>
<span class="t" style="left:409.6px;top:65.80px;font-size:9.26px;line-height:14px;color:#6cc0ae;letter-spacing:0.155px;">container_test.go</span>
<svg style="left:489.5px;top:69.8px;" width="6" height="6" viewBox="0 0 6 6"><path d="M0.500 0.500l5 5M5.500 0.500l-5 5" stroke="#687570" stroke-width=".9"/></svg>
<div style="left:290px;top:82.3px;width:54px;height:312.7px;background:#313335;"></div>
<div style="left:344px;top:82.3px;width:675px;height:312.7px;background:#2b2b2b;"></div>
<div style="left:290px;top:340.692px;width:54px;height:12.656px;background:#2f3133;"></div>
<div style="left:344px;top:340.692px;width:661px;height:12.656px;background:#323232;"></div>
<div style="left:343.3px;top:82.3px;width:1px;height:312.7px;background:#4d4f51;"></div>
<div style="left:346.5px;top:124px;width:672.5px;height:1px;background:#4e5052;"></div>
<div style="left:346.5px;top:377px;width:672.5px;height:1px;background:#4e5052;"></div>
<div style="left:336.3px;top:176.16400000000002px;width:5.8px;height:25.312px;background:#384c5f;"></div>
<div style="left:336.3px;top:226.788px;width:5.8px;height:25.312px;background:#384c5f;"></div>
<div style="left:336.3px;top:264.75600000000003px;width:5.8px;height:12.656px;background:#44604a;"></div>
<div style="left:336.3px;top:290.06800000000004px;width:5.8px;height:63.28px;background:#384c5f;"></div>
<style>.c{font-family:'DejaVu Sans Mono', 'Liberation Mono', monospace;font-size:9.826px;line-height:11px;height:11px;color:#a9b7c6;}</style>
<div style="left:290px;top:82.300px;width:729px;height:312.700px;overflow:hidden;">
<div style="left:-290px;top:-82.300px;width:1080px;height:675px;">
<span class="t" style="left:294.6px;top:76.00px;font-size:9.3px;line-height:11px;color:#6c6f72;font-family:'DejaVu Sans Mono', 'Liberation Mono', monospace;letter-spacing:0.001px;">216</span>
<span class="t c" style="left:347.7px;top:76px;">    <span style="color:#808080">// s1 = [1 2 3 4 5 6 7]</span></span>
<span class="t" style="left:294.6px;top:88.00px;font-size:9.3px;line-height:11px;color:#6c6f72;font-family:'DejaVu Sans Mono', 'Liberation Mono', monospace;letter-spacing:0.001px;">217</span>
<span class="t" style="left:294.6px;top:101.00px;font-size:9.3px;line-height:11px;color:#6c6f72;font-family:'DejaVu Sans Mono', 'Liberation Mono', monospace;letter-spacing:0.001px;">218</span>
<span class="t" style="left:294.6px;top:114.00px;font-size:9.3px;line-height:11px;color:#6c6f72;font-family:'DejaVu Sans Mono', 'Liberation Mono', monospace;letter-spacing:0.001px;">219</span>
<span class="t" style="left:294.6px;top:126.00px;font-size:9.3px;line-height:11px;color:#6c6f72;font-family:'DejaVu Sans Mono', 'Liberation Mono', monospace;letter-spacing:0.001px;">220</span>
<span class="t" style="left:294.6px;top:139.00px;font-size:9.3px;line-height:11px;color:#6c6f72;font-family:'DejaVu Sans Mono', 'Liberation Mono', monospace;letter-spacing:0.001px;">221</span>
<span class="t" style="left:294.6px;top:151.00px;font-size:9.3px;line-height:11px;color:#6c6f72;font-family:'DejaVu Sans Mono', 'Liberation Mono', monospace;letter-spacing:0.001px;">222</span>
<span class="t" style="left:294.6px;top:164.00px;font-size:9.3px;line-height:11px;color:#6c6f72;font-family:'DejaVu Sans Mono', 'Liberation Mono', monospace;letter-spacing:0.001px;">223</span>
<span class="t" style="left:294.6px;top:177.00px;font-size:9.3px;line-height:11px;color:#6c6f72;font-family:'DejaVu Sans Mono', 'Liberation Mono', monospace;letter-spacing:0.001px;">224</span>
<span class="t" style="left:294.6px;top:189.00px;font-size:9.3px;line-height:11px;color:#6c6f72;font-family:'DejaVu Sans Mono', 'Liberation Mono', monospace;letter-spacing:0.001px;">225</span>
<span class="t" style="left:294.6px;top:202.00px;font-size:9.3px;line-height:11px;color:#6c6f72;font-family:'DejaVu Sans Mono', 'Liberation Mono', monospace;letter-spacing:0.001px;">226</span>
<span class="t" style="left:294.6px;top:215.00px;font-size:9.3px;line-height:11px;color:#6c6f72;font-family:'DejaVu Sans Mono', 'Liberation Mono', monospace;letter-spacing:0.001px;">227</span>
<span class="t" style="left:294.6px;top:227.00px;font-size:9.3px;line-height:11px;color:#6c6f72;font-family:'DejaVu Sans Mono', 'Liberation Mono', monospace;letter-spacing:0.001px;">228</span>
<span class="t" style="left:294.6px;top:240.00px;font-size:9.3px;line-height:11px;color:#6c6f72;font-family:'DejaVu Sans Mono', 'Liberation Mono', monospace;letter-spacing:0.001px;">229</span>
<span class="t" style="left:294.6px;top:253.00px;font-size:9.3px;line-height:11px;color:#6c6f72;font-family:'DejaVu Sans Mono', 'Liberation Mono', monospace;letter-spacing:0.001px;">230</span>
<span class="t" style="left:294.6px;top:265.00px;font-size:9.3px;line-height:11px;color:#6c6f72;font-family:'DejaVu Sans Mono', 'Liberation Mono', monospace;letter-spacing:0.001px;">231</span>
<span class="t" style="left:294.6px;top:278.00px;font-size:9.3px;line-height:11px;color:#6c6f72;font-family:'DejaVu Sans Mono', 'Liberation Mono', monospace;letter-spacing:0.001px;">232</span>
<span class="t" style="left:294.6px;top:291.00px;font-size:9.3px;line-height:11px;color:#6c6f72;font-family:'DejaVu Sans Mono', 'Liberation Mono', monospace;letter-spacing:0.001px;">233</span>
<span class="t" style="left:294.6px;top:303.00px;font-size:9.3px;line-height:11px;color:#6c6f72;font-family:'DejaVu Sans Mono', 'Liberation Mono', monospace;letter-spacing:0.001px;">234</span>
<span class="t" style="left:294.6px;top:316.00px;font-size:9.3px;line-height:11px;color:#6c6f72;font-family:'DejaVu Sans Mono', 'Liberation Mono', monospace;letter-spacing:0.001px;">235</span>
<span class="t" style="left:294.6px;top:329.00px;font-size:9.3px;line-height:11px;color:#6c6f72;font-family:'DejaVu Sans Mono', 'Liberation Mono', monospace;letter-spacing:0.001px;">236</span>
<span class="t" style="left:294.6px;top:341.00px;font-size:9.3px;line-height:11px;color:#b0b2b4;font-family:'DejaVu Sans Mono', 'Liberation Mono', monospace;letter-spacing:0.001px;">237</span>
<span class="t" style="left:294.6px;top:354.00px;font-size:9.3px;line-height:11px;color:#6c6f72;font-family:'DejaVu Sans Mono', 'Liberation Mono', monospace;letter-spacing:0.001px;">238</span>
<span class="t" style="left:294.6px;top:367.00px;font-size:9.3px;line-height:11px;color:#6c6f72;font-family:'DejaVu Sans Mono', 'Liberation Mono', monospace;letter-spacing:0.001px;">239</span>
<span class="t" style="left:294.6px;top:379.00px;font-size:9.3px;line-height:11px;color:#6c6f72;font-family:'DejaVu Sans Mono', 'Liberation Mono', monospace;letter-spacing:0.001px;">240</span>
<span class="t" style="left:294.6px;top:392.00px;font-size:9.3px;line-height:11px;color:#6c6f72;font-family:'DejaVu Sans Mono', 'Liberation Mono', monospace;letter-spacing:0.001px;">241</span>
<span class="t c" style="left:347.7px;top:88px;">    t.Log<span style="color:#e0c432">(</span><span style="display:inline-block;font-family:'Liberation Sans', 'Noto Sans CJK SC', sans-serif;font-size:9px;letter-spacing:0.22px;color:#7a7c7e;background:#303132;border-radius:2px;width:36.5px;margin:0 3.4px 0 2px;text-align:center;text-indent:0.22px;height:11px;line-height:11px;vertical-align:top;margin-top:0px;">args...:</span><span style="color:#6a8759">"s1 = "</span><span style="color:#c47834">,</span> s1<span style="color:#e0c432">)</span></span>
<span class="t c" style="left:347.7px;top:101px;"><span style="color:#e0c432">}</span></span>
<span class="t c" style="left:347.7px;top:126px;"><span style="color:#cc7832">func </span><span style="color:#ffc66d">TestSliceOutOfBound</span><span style="color:#e0c432">(</span>t *testing.<span style="color:#6fafbd">T</span><span style="color:#e0c432">)</span> <span style="color:#e0c432">{</span></span>
<span class="t c" style="left:347.7px;top:139px;">    arr := <span style="color:#e0c432">[</span>...<span style="color:#e0c432">]</span><span style="color:#6fafbd">int</span><span style="color:#4f9c54">{</span><span style="color:#6897bb">0</span><span style="color:#c47834">,</span> <span style="color:#6897bb">1</span><span style="color:#c47834">,</span> <span style="color:#6897bb">2</span><span style="color:#c47834">,</span> <span style="color:#6897bb">3</span><span style="color:#c47834">,</span> <span style="color:#6897bb">4</span><span style="color:#c47834">,</span> <span style="color:#6897bb">5</span><span style="color:#c47834">,</span> <span style="color:#6897bb">6</span><span style="color:#c47834">,</span> <span style="color:#6897bb">7</span><span style="color:#4f9c54">}</span></span>
<span class="t c" style="left:347.7px;top:164px;">    s1 := arr<span style="color:#e0c432">[</span><span style="color:#6897bb">2</span>:<span style="color:#6897bb">6</span><span style="color:#e0c432">]</span></span>
<span class="t c" style="left:347.7px;top:177px;">    <span style="color:#808080">// s1 = [2 3 4 5], len(s1) = 4, cap(s1) = 6</span></span>
<span class="t c" style="left:347.7px;top:189px;">    t.Logf<span style="color:#e0c432">(</span><span style="display:inline-block;font-family:'Liberation Sans', 'Noto Sans CJK SC', sans-serif;font-size:9px;letter-spacing:0.4px;color:#7a7c7e;background:#303132;border-radius:2px;width:38px;margin:0 2.2px 0 2.1px;text-align:center;text-indent:0.4px;height:11px;line-height:11px;vertical-align:top;margin-top:0px;">format:</span><span style="color:#6a8759">"s1 = %v, len(s1) = %d, cap(s1) = %d"</span><span style="color:#c47834">,</span> s1<span style="color:#c47834">,</span> len<span style="color:#4f9c54">(</span>s1<span style="color:#4f9c54">)</span><span style="color:#c47834">,</span> cap<span style="color:#4f9c54">(</span>s1<span style="color:#4f9c54">)</span><span style="color:#e0c432">)</span></span>
<span class="t c" style="left:347.7px;top:215px;">    s2 := s1<span style="color:#e0c432">[</span><span style="color:#6897bb">3</span>:<span style="color:#6897bb">5</span><span style="color:#e0c432">]</span></span>
<span class="t c" style="left:347.7px;top:227px;">    <span style="color:#808080">// s2 = [5 6], len(s2) = 2, cap(s2) = 3</span></span>
<span class="t c" style="left:347.7px;top:240px;">    t.Logf<span style="color:#e0c432">(</span><span style="display:inline-block;font-family:'Liberation Sans', 'Noto Sans CJK SC', sans-serif;font-size:9px;letter-spacing:0.4px;color:#7a7c7e;background:#303132;border-radius:2px;width:38px;margin:0 2.2px 0 2.1px;text-align:center;text-indent:0.4px;height:11px;line-height:11px;vertical-align:top;margin-top:0px;">format:</span><span style="color:#6a8759">"s2 = %v, len(s2) = %d, cap(s2) = %d"</span><span style="color:#c47834">,</span> s2<span style="color:#c47834">,</span> len<span style="color:#4f9c54">(</span>s2<span style="color:#4f9c54">)</span><span style="color:#c47834">,</span> cap<span style="color:#4f9c54">(</span>s2<span style="color:#4f9c54">)</span><span style="color:#e0c432">)</span></span>
<span class="t c" style="left:347.7px;top:265px;">    <span style="color:#808080">//t.Log(s1[3])</span></span>
<span class="t c" style="left:347.7px;top:278px;">    <span style="color:#808080">// index out of range</span></span>
<span class="t c" style="left:347.7px;top:291px;">    <span style="color:#808080">//t.Log(s1[4])</span></span>
<span class="t c" style="left:347.7px;top:316px;">    t.Log<span style="color:#e0c432">(</span>s1<span style="color:#e0c432">[</span><span style="color:#6897bb">3</span>:<span style="color:#6897bb">6</span><span style="color:#e0c432">]</span><span style="color:#e0c432">)</span></span>
<span class="t c" style="left:347.7px;top:329px;">    <span style="color:#808080">// slice bounds out of range</span></span>
<div style="left:400.94399999999996px;top:341.192px;width:5.916px;height:11.656px;background:#3b514d;"></div>
<div style="left:448.272px;top:341.192px;width:5.916px;height:11.656px;background:#3b514d;"></div>
<span class="t c" style="left:347.7px;top:341px;">    t.Log<span style="color:#e0c432">(</span>s1<span style="color:#e0c432">[</span><span style="color:#6897bb">3</span>:<span style="color:#6897bb">7</span><span style="color:#e0c432">]</span><span style="color:#e0c432">)</span></span>
<div style="left:454.488px;top:340.692px;width:1.1px;height:12.656px;background:#d0d0d0;"></div>
<span class="t c" style="left:347.7px;top:354px;"><span style="color:#e0c432">}</span></span>
<span class="t c" style="left:347.7px;top:379px;"><span style="color:#cc7832">func </span><span style="color:#ffc66d">TestSliceDetail</span><span style="color:#e0c432">(</span>t *testing.<span style="color:#6fafbd">T</span><span style="color:#e0c432">)</span> <span style="color:#e0c432">{</span></span>
<span class="t c" style="left:347.7px;top:392px;">    arr := <span style="color:#e0c432">[</span>...<span style="color:#e0c432">]</span><span style="color:#6fafbd">int</span><span style="color:#4f9c54">{</span><span style="color:#6897bb">0</span><span style="color:#c47834">,</span> <span style="color:#6897bb">1</span><span style="color:#c47834">,</span> <span style="color:#6897bb">2</span><span style="color:#c47834">,</span> <span style="color:#6897bb">3</span><span style="color:#c47834">,</span> <span style="color:#6897bb">4</span><span style="color:#c47834">,</span> <span style="color:#6897bb">5</span><span style="color:#c47834">,</span> <span style="color:#6897bb">6</span><span style="color:#c47834">,</span> <span style="color:#6897bb">7</span><span style="color:#4f9c54">}</span></span>
<svg style="left:318.5px;top:125px;" width="12" height="12" viewBox="0 0 12 12"><circle cx="4.600" cy="4.800" r="4.200" fill="#d25252"/><path d="M4.600 2.300v3.200M4.600 6.500v1" stroke="#f3dada" stroke-width="1.100"/><path d="M5.800 5.500l5.500 3.200-5.500 3.200z" fill="#57a64a" stroke="#313335" stroke-width=".5"/></svg>
<svg style="left:318.5px;top:378.98800000000006px;" width="12" height="12" viewBox="0 0 12 12"><circle cx="5" cy="5" r="4.500" fill="#57a64a"/><path d="M2.800 4.500q2.200-3 4.400 0M7.200 5.500q-2.200 3-4.400 0" fill="none" stroke="#dff0dc" stroke-width="1"/><path d="M6.500 6l5 3-5 3z" fill="#57a64a" stroke="#313335" stroke-width=".5"/></svg>
<svg style="left:340.3px;top:103.55600000000001px;" width="6.6" height="7" viewBox="0 0 6.6 7"><path d="M0.500 6.500v-3.500l2.800-2.400 2.800 2.400v3.500z" fill="#2b2b2b" stroke="#5e6062" stroke-width=".8"/><path d="M2 4.200h2.600" stroke="#5e6062" stroke-width=".8"/></svg>
<svg style="left:340.3px;top:127.868px;" width="6.6" height="7" viewBox="0 0 6.6 7"><path d="M0.500 0.500v3.500l2.800 2.400 2.800-2.400v-3.500z" fill="#2b2b2b" stroke="#5e6062" stroke-width=".8"/><path d="M2 2.800h2.600" stroke="#5e6062" stroke-width=".8"/></svg>
<svg style="left:340.3px;top:267.084px;" width="6.6" height="7" viewBox="0 0 6.6 7"><path d="M0.500 0.500v3.500l2.800 2.400 2.800-2.400v-3.500z" fill="#2b2b2b" stroke="#5e6062" stroke-width=".8"/><path d="M2 2.800h2.600" stroke="#5e6062" stroke-width=".8"/></svg>
<svg style="left:340.3px;top:293.396px;" width="6.6" height="7" viewBox="0 0 6.6 7"><path d="M0.500 6.500v-3.500l2.800-2.400 2.800 2.400v3.500z" fill="#2b2b2b" stroke="#5e6062" stroke-width=".8"/><path d="M2 4.200h2.600" stroke="#5e6062" stroke-width=".8"/></svg>
<svg style="left:340.3px;top:356.67600000000004px;" width="6.6" height="7" viewBox="0 0 6.6 7"><path d="M0.500 6.500v-3.500l2.800-2.400 2.800 2.400v3.500z" fill="#2b2b2b" stroke="#5e6062" stroke-width=".8"/><path d="M2 4.200h2.600" stroke="#5e6062" stroke-width=".8"/></svg>
<svg style="left:340.3px;top:380.98800000000006px;" width="6.6" height="7" viewBox="0 0 6.6 7"><path d="M0.500 0.500v3.500l2.800 2.400 2.800-2.400v-3.500z" fill="#2b2b2b" stroke="#5e6062" stroke-width=".8"/><path d="M2 2.800h2.600" stroke="#5e6062" stroke-width=".8"/></svg>
</div></div>
<div style="left:1005px;top:82.3px;width:14px;height:312.7px;background:#2b2b2b;"></div>
<div style="left:1008.9px;top:84px;width:8.9px;height:9px;background:#e0ac20;"></div>
<div style="left:1011.200px;top:173.300px;width:5.400px;height:25.500px;border-radius:3px;background:#525354;"></div>
<div style="left:1003.9px;top:134.2px;width:1.8px;height:11.3px;background:#48695e;"></div>
<div style="left:1003.9px;top:150.2px;width:1.8px;height:3.6px;background:#48695e;"></div>
<div style="left:1003.9px;top:178.7px;width:1.8px;height:11.3px;background:#426678;"></div>
<div style="left:1003.9px;top:202.5px;width:1.8px;height:12.3px;background:#426678;"></div>
<div style="left:1007.3px;top:202.3px;width:11.7px;height:1.6px;background:#d4a520;"></div>
<div style="left:1007.3px;top:225.6px;width:11.7px;height:1.6px;background:#d4a520;"></div>
<div style="left:1007.3px;top:229.7px;width:11.7px;height:1.6px;background:#d4a520;"></div>
<div style="left:1005px;top:124px;width:14px;height:1px;background:#4e5052;"></div>
<div style="left:1005px;top:377px;width:14px;height:1px;background:#4e5052;"></div>
<div style="left:1005px;top:340.692px;width:14px;height:12.656px;background:#323232;"></div>
<div style="left:1019px;top:82.3px;width:42.5px;height:312.7px;background:#2b2b2b;"></div>
<div style="left:1019px;top:144.3px;width:42.5px;height:9px;background:#262626;"></div>
<div style="left:1019px;top:153.2px;width:42.5px;height:58.8px;background:#3d3e3f;"></div>
<svg style="left:1019px;top:82.3px;" width="42.5" height="312.7" viewBox="0 0 42.5 312.7"><rect x="5.4" y="0.3" width="11.6" height="1.3" fill="rgba(150,150,150,.26)"/><rect x="5.4" y="4.5" width="10.6" height="1.3" fill="rgba(190,200,212,.36)"/><rect x="5.4" y="7.1" width="13.6" height="1.3" fill="rgba(150,150,150,.26)"/><rect x="5.4" y="9.7" width="15.6" height="1.3" fill="rgba(190,200,212,.36)"/><rect x="5.4" y="14.9" width="10.6" height="1.3" fill="rgba(190,200,212,.36)"/><rect x="5.4" y="17.5" width="12.6" height="1.3" fill="rgba(150,150,150,.26)"/><rect x="5.4" y="20.1" width="15.6" height="1.3" fill="rgba(190,200,212,.36)"/><rect x="5.4" y="25.7" width="11.6" height="1.3" fill="rgba(190,200,212,.36)"/><rect x="5.4" y="28.4" width="20.6" height="1.3" fill="rgba(150,150,150,.26)"/><rect x="5.4" y="31.1" width="15.6" height="1.3" fill="rgba(190,200,212,.36)"/><rect x="5.4" y="33.9" width="27.6" height="1.3" fill="rgba(150,150,150,.26)"/><rect x="5.4" y="36.4" width="15.6" height="1.3" fill="rgba(190,200,212,.36)"/><rect x="5.4" y="39.5" width="11.1" height="1.3" fill="rgba(190,200,212,.36)"/><rect x="5.4" y="43.0" width="21.2" height="1.3" fill="rgba(150,150,150,.26)"/><rect x="5.4" y="45.7" width="14.1" height="1.3" fill="rgba(190,200,212,.36)"/><rect x="5.4" y="48.4" width="27.6" height="1.3" fill="rgba(150,150,150,.26)"/><rect x="5.4" y="50.7" width="15.9" height="1.3" fill="rgba(190,200,212,.36)"/><rect x="1.4" y="53.1" width="1.2" height="1.3" fill="rgba(214,130,58,.65)"/><rect x="1.4" y="58.4" width="2.9" height="1.3" fill="rgba(214,130,58,.65)"/><rect x="5.4" y="58.4" width="22.4" height="1.3" fill="rgba(190,200,212,.36)"/><rect x="5.4" y="60.9" width="36.6" height="1.3" fill="rgba(190,200,212,.30)"/><rect x="5.4" y="65.9" width="11.1" height="1.3" fill="rgba(190,200,212,.36)"/><rect x="5.4" y="68.6" width="14.6" height="1.3" fill="rgba(150,150,150,.26)"/><rect x="5.4" y="71.3" width="14.6" height="1.3" fill="rgba(190,200,212,.36)"/><rect x="5.4" y="75.9" width="10.0" height="1.3" fill="rgba(190,200,212,.36)"/><rect x="5.4" y="78.6" width="11.1" height="1.3" fill="rgba(150,150,150,.26)"/><rect x="5.4" y="81.3" width="14.6" height="1.3" fill="rgba(190,200,212,.36)"/><rect x="5.4" y="86.3" width="10.0" height="1.3" fill="rgba(190,200,212,.36)"/><rect x="5.4" y="89.0" width="18.2" height="1.3" fill="rgba(150,150,150,.26)"/><rect x="5.4" y="91.7" width="14.6" height="1.3" fill="rgba(190,200,212,.36)"/><rect x="1.4" y="94.3" width="1.2" height="1.3" fill="rgba(214,130,58,.65)"/><rect x="1.4" y="99.0" width="2.9" height="1.3" fill="rgba(214,130,58,.65)"/><rect x="5.4" y="99.0" width="30.1" height="1.3" fill="rgba(190,200,212,.36)"/><rect x="5.4" y="101.5" width="31.3" height="1.3" fill="rgba(190,200,212,.30)"/><rect x="5.4" y="106.4" width="11.1" height="1.3" fill="rgba(190,200,212,.36)"/><rect x="5.4" y="109.1" width="33.6" height="1.3" fill="rgba(150,150,150,.26)"/><rect x="5.4" y="111.8" width="36.9" height="1.3" fill="rgba(190,200,212,.36)"/><rect x="5.4" y="116.5" width="10.0" height="1.3" fill="rgba(190,200,212,.36)"/><rect x="5.4" y="119.2" width="33.6" height="1.3" fill="rgba(150,150,150,.26)"/><rect x="5.4" y="121.9" width="36.9" height="1.3" fill="rgba(190,200,212,.36)"/><rect x="5.4" y="127.0" width="11.6" height="1.3" fill="rgba(150,150,150,.26)"/><rect x="5.4" y="129.7" width="18.6" height="1.3" fill="rgba(190,200,212,.36)"/><rect x="5.4" y="135.0" width="11.6" height="1.3" fill="rgba(190,200,212,.36)"/><rect x="5.4" y="137.7" width="19.6" height="1.3" fill="rgba(150,150,150,.26)"/><rect x="5.4" y="140.4" width="16.6" height="1.3" fill="rgba(190,200,212,.36)"/><rect x="1.4" y="145.7" width="1.2" height="1.3" fill="rgba(214,130,58,.65)"/><rect x="1.4" y="149.7" width="2.9" height="1.3" fill="rgba(214,130,58,.65)"/><rect x="5.4" y="149.7" width="25.6" height="1.3" fill="rgba(190,200,212,.36)"/><rect x="5.4" y="152.2" width="36.6" height="1.3" fill="rgba(190,200,212,.30)"/><rect x="5.4" y="162.5" width="10.6" height="1.3" fill="rgba(190,200,212,.36)"/><rect x="5.4" y="165.4" width="33.6" height="1.3" fill="rgba(150,150,150,.26)"/><rect x="5.4" y="168.3" width="36.9" height="1.3" fill="rgba(190,200,212,.36)"/><rect x="5.4" y="172.5" width="10.6" height="1.3" fill="rgba(190,200,212,.36)"/><rect x="5.4" y="175.4" width="33.6" height="1.3" fill="rgba(150,150,150,.26)"/><rect x="5.4" y="178.3" width="36.9" height="1.3" fill="rgba(190,200,212,.36)"/><rect x="5.4" y="182.7" width="15.6" height="1.3" fill="rgba(150,150,150,.26)"/><rect x="5.4" y="185.5" width="12.6" height="1.3" fill="rgba(150,150,150,.26)"/><rect x="1.4" y="188.2" width="1.2" height="1.3" fill="rgba(214,130,58,.65)"/><rect x="1.6" y="192.7" width="2.4" height="1.3" fill="rgba(214,130,58,.65)"/><rect x="5.4" y="192.7" width="11.6" height="1.3" fill="rgba(190,200,212,.36)"/><rect x="18.2" y="192.7" width="11.8" height="1.3" fill="rgba(190,200,212,.36)"/><rect x="1.6" y="197.8" width="2.4" height="1.3" fill="rgba(214,130,58,.65)"/><rect x="5.4" y="197.8" width="11.6" height="1.3" fill="rgba(190,200,212,.36)"/><rect x="18.2" y="197.8" width="7.8" height="1.3" fill="rgba(190,200,212,.36)"/><rect x="1.6" y="202.8" width="2.4" height="1.3" fill="rgba(214,130,58,.65)"/><rect x="5.4" y="202.8" width="11.6" height="1.3" fill="rgba(190,200,212,.36)"/><rect x="18.2" y="202.8" width="1.8" height="1.3" fill="rgba(190,200,212,.36)"/><rect x="1.6" y="207.9" width="2.4" height="1.3" fill="rgba(214,130,58,.65)"/><rect x="5.4" y="207.9" width="11.6" height="1.3" fill="rgba(190,200,212,.36)"/><rect x="18.2" y="207.9" width="14.8" height="1.3" fill="rgba(190,200,212,.36)"/><rect x="1.6" y="213.0" width="2.4" height="1.3" fill="rgba(214,130,58,.65)"/><rect x="5.4" y="213.0" width="11.6" height="1.3" fill="rgba(190,200,212,.36)"/><rect x="18.2" y="213.0" width="7.8" height="1.3" fill="rgba(190,200,212,.36)"/><rect x="1.6" y="218.1" width="2.4" height="1.3" fill="rgba(214,130,58,.65)"/><rect x="5.4" y="218.1" width="11.6" height="1.3" fill="rgba(190,200,212,.36)"/><rect x="18.2" y="218.1" width="18.8" height="1.3" fill="rgba(190,200,212,.36)"/><rect x="1.6" y="223.1" width="2.4" height="1.3" fill="rgba(214,130,58,.65)"/><rect x="5.4" y="223.1" width="11.6" height="1.3" fill="rgba(190,200,212,.36)"/><rect x="18.2" y="223.1" width="19.8" height="1.3" fill="rgba(190,200,212,.36)"/><rect x="1.6" y="228.2" width="2.4" height="1.3" fill="rgba(214,130,58,.65)"/><rect x="5.4" y="228.2" width="11.6" height="1.3" fill="rgba(190,200,212,.36)"/><rect x="18.2" y="228.2" width="24.1" height="1.3" fill="rgba(190,200,212,.36)"/><rect x="1.6" y="233.3" width="2.4" height="1.3" fill="rgba(214,130,58,.65)"/><rect x="5.4" y="233.3" width="11.6" height="1.3" fill="rgba(190,200,212,.36)"/><rect x="18.2" y="233.3" width="6.8" height="1.3" fill="rgba(190,200,212,.36)"/><rect x="1.6" y="238.3" width="2.4" height="1.3" fill="rgba(214,130,58,.65)"/><rect x="5.4" y="238.3" width="11.6" height="1.3" fill="rgba(190,200,212,.36)"/><rect x="18.2" y="238.3" width="7.8" height="1.3" fill="rgba(190,200,212,.36)"/><rect x="1.6" y="243.4" width="2.4" height="1.3" fill="rgba(214,130,58,.65)"/><rect x="5.4" y="243.4" width="11.6" height="1.3" fill="rgba(190,200,212,.36)"/><rect x="18.2" y="243.4" width="6.8" height="1.3" fill="rgba(190,200,212,.36)"/><rect x="1.6" y="248.7" width="2.4" height="1.3" fill="rgba(214,130,58,.65)"/><rect x="5.4" y="248.7" width="17.6" height="1.3" fill="rgba(190,200,212,.36)"/><rect x="7.0" y="251.0" width="14.0" height="1.3" fill="rgba(190,200,212,.36)"/><rect x="9.0" y="253.2" width="20.0" height="1.3" fill="rgba(120,160,100,.5)"/><rect x="9.0" y="255.5" width="33.3" height="1.3" fill="rgba(120,160,100,.5)"/><rect x="8.0" y="262.5" width="34.3" height="1.3" fill="rgba(150,150,150,.26)"/><rect x="5.4" y="265.7" width="7.6" height="1.3" fill="rgba(190,200,212,.36)"/><rect x="1.4" y="268.4" width="1.2" height="1.3" fill="rgba(214,130,58,.65)"/><rect x="1.6" y="274.4" width="2.4" height="1.3" fill="rgba(214,130,58,.65)"/><rect x="5.4" y="274.4" width="24.6" height="1.3" fill="rgba(190,200,212,.36)"/><rect x="5.4" y="276.7" width="6.6" height="1.3" fill="rgba(150,150,150,.26)"/><rect x="5.4" y="279.1" width="20.6" height="1.3" fill="rgba(190,200,212,.36)"/><rect x="5.4" y="285.1" width="6.6" height="1.3" fill="rgba(150,150,150,.26)"/><rect x="5.4" y="287.5" width="16.6" height="1.3" fill="rgba(190,200,212,.36)"/><rect x="5.4" y="292.2" width="2.6" height="1.3" fill="rgba(214,130,58,.65)"/><rect x="5.4" y="294.7" width="15.6" height="1.3" fill="rgba(190,200,212,.36)"/><rect x="5.4" y="300.1" width="6.6" height="1.3" fill="rgba(150,150,150,.26)"/><rect x="5.4" y="302.5" width="16.6" height="1.3" fill="rgba(190,200,212,.36)"/><rect x="1.4" y="305.3" width="1.2" height="1.3" fill="rgba(214,130,58,.65)"/><rect x="1.6" y="308.2" width="2.4" height="1.3" fill="rgba(214,130,58,.65)"/><rect x="5.4" y="308.2" width="25.6" height="1.3" fill="rgba(190,200,212,.36)"/><rect x="7.0" y="310.9" width="18.0" height="1.3" fill="rgba(190,200,212,.36)"/></svg>
<div style="left:290px;top:395px;width:771px;height:19.5px;background:#323436;"></div>
<span class="t" style="left:351.3px;top:398.00px;font-size:10.46px;line-height:14px;color:#c0c2c4;letter-spacing:0.176px;">TestSliceOutOfBound(t *testing.T)</span>
<div style="left:17px;top:414.2px;width:273px;height:0.6px;background:#3a3c3e;"></div>
<div style="left:1061px;top:62px;width:19px;height:577px;background:#3c3f41;"></div>
<div style="left:1061px;top:62px;width:1px;height:577px;background:#37393b;"></div>
<svg style="left:1065px;top:69px;" width="11" height="12" viewBox="0 0 11 12"><g fill="#c3c5c7"><ellipse cx="5.500" cy="3" rx="1.900" ry="1.700"/><ellipse cx="5.500" cy="6" rx="1.500" ry="1.500"/><ellipse cx="5.500" cy="9.500" rx="2.300" ry="2.500"/></g><path d="M0.800 1l3 3.500M10.200 1l-3 3.500M0.500 6h10M0.800 11.500l3-4M10.200 11.500l-3-4" stroke="#c3c5c7" stroke-width=".9" fill="none"/></svg>
<span class="t" style="left:1070.6px;top:104.8px;font-size:9.28px;line-height:14px;color:#c6c8ca;letter-spacing:0.159px;transform:translate(-50%,-50%) rotate(90deg);">Ant Build</span>
<span class="t" style="left:1064.3px;top:136.10px;font-size:14.5px;line-height:19px;color:#c3c5c7;font-weight:700;font-style:italic;">m</span>
<span class="t" style="left:1070.6px;top:170.6px;font-size:9.07px;line-height:14px;color:#c6c8ca;letter-spacing:0.217px;transform:translate(-50%,-50%) rotate(90deg);">Maven</span>
<svg style="left:1065px;top:202.5px;" width="11" height="11" viewBox="0 0 11 11"><circle cx="5.500" cy="5.500" r="5.300" fill="#d0d2d4"/><path d="M2 2l7 7M9 2l-7 7" stroke="#3c3f41" stroke-width="1.100"/><circle cx="5.500" cy="5.500" r="2.100" fill="#d0d2d4" stroke="#3c3f41" stroke-width=".9"/></svg>
<span class="t" style="left:1070.6px;top:253.5px;font-size:9.16px;line-height:14px;color:#c6c8ca;letter-spacing:0.173px;transform:translate(-50%,-50%) rotate(90deg);">Key Promoter X</span>
<span class="t" style="left:1070.6px;top:329.2px;font-size:9.51px;line-height:14px;color:#c6c8ca;letter-spacing:0.175px;transform:translate(-50%,-50%) rotate(90deg);">1024 Tools</span>
<svg style="left:1065.5px;top:370.5px;" width="10" height="11" viewBox="0 0 10 11"><g fill="none" stroke="#c3c5c7" stroke-width="1.200"><ellipse cx="5" cy="2.300" rx="4.200" ry="1.600"/><path d="M0.800 2.300v6.400q0 1.600 4.200 1.600t4.200-1.600v-6.400M0.800 5.500q0 1.600 4.200 1.600t4.200-1.600"/></g><path d="M1.300 3.500h7.400v1.800q-3.700 1.500-7.400 0zM1.300 6.800h7.400v1.800q-3.700 1.500-7.400 0z" fill="#c3c5c7"/></svg>
<span class="t" style="left:1070.6px;top:405.5px;font-size:9.24px;line-height:14px;color:#c6c8ca;letter-spacing:0.192px;transform:translate(-50%,-50%) rotate(90deg);">Database</span>
<div style="left:17px;top:414.5px;width:1044px;height:21px;background:#3d4042;"></div>
<div style="left:17px;top:434.3px;width:1044px;height:0.8px;background:#383b3d;"></div>
<span class="t" style="left:23px;top:418.30px;font-size:9.78px;line-height:14px;color:#bbbdbf;letter-spacing:0.211px;">Run:</span>
<div style="left:49px;top:414.5px;width:267.5px;height:18.3px;background:#36393b;"></div>
<svg style="left:63px;top:419px;" width="11.5" height="12.5" viewBox="0 0 11.5 12.5"><g opacity="0.5"><path d="M1 3.600q0-3.100 3.300-3.100t3.300 3.100v6.300q0 2.200-3.300 2.200t-3.300-2.200z" fill="#7fcbe8"/><circle cx="1.300" cy="1.500" r="1" fill="#7fcbe8"/><circle cx="7.300" cy="1.500" r="1" fill="#7fcbe8"/><circle cx="2.900" cy="3.300" r="1.500" fill="#f4f8fa"/><circle cx="5.700" cy="3.300" r="1.500" fill="#f4f8fa"/><circle cx="3.200" cy="3.500" r=".5" fill="#3a5560"/><circle cx="6" cy="3.500" r=".5" fill="#3a5560"/><rect x="3.600" y="4.700" width="1.400" height="1.500" rx=".5" fill="#f0e6d0"/><path d="M2.400 6.500h3.800v4.500q-1.900.8-3.800 0z" fill="#a6e0f2" opacity=".6"/></g></svg>
<span class="t" style="left:78px;top:418.40px;font-size:10.32px;line-height:14px;color:#bbbdbf;letter-spacing:0.188px;">TestSliceOutOfBound in github.com/snowdr…</span>
<svg style="left:301.5px;top:422.2px;" width="6.5" height="6.5" viewBox="0 0 6.5 6.5"><path d="M0.500 0.500l5.500 5.500M6 0.500l-5.500 5.500" stroke="#707375" stroke-width="1"/></svg>
<svg style="left:1021.8000000000001px;top:418.4px;" width="11.2" height="11.2" viewBox="0 0 11.2 11.2"><g transform="translate(5.6,5.6)" fill="#b4b6b8"><rect x="-1.600" y="-5.6" width="3.200" height="11.2" rx=".5" transform="rotate(0)"/><rect x="-1.600" y="-5.6" width="3.200" height="11.2" rx=".5" transform="rotate(60)"/><rect x="-1.600" y="-5.6" width="3.200" height="11.2" rx=".5" transform="rotate(120)"/><circle r="4.144"/></g><circle cx="5.6" cy="5.6" r="2.016" fill="#3c3f41"/></svg>
<div style="left:1044px;top:423.3px;width:11px;height:1.5px;background:#b4b6b8;"></div>
<div style="left:17px;top:436px;width:24px;height:203px;background:#3c3f41;"></div>
<div style="left:41px;top:436px;width:1px;height:203px;background:#393b3d;"></div>
<svg style="left:24.3px;top:443.2px;" width="9.5" height="9.8" viewBox="0 0 9.5 9.8"><path d="M0.300 0.200l9 4.700-9 4.700z" fill="#4fa052"/></svg>
<svg style="left:21.5px;top:463.5px;" width="15" height="14" viewBox="0 0 15 14"><path d="M0.500 4.500l8 4.500-8 4.500z" fill="#57a64a"/><circle cx="9.300" cy="5" r="4.700" fill="#e05555"/><path d="M9.300 2.300v3.400M9.300 6.700v1.200" stroke="#ffffff" stroke-width="1.300"/></svg>
<svg style="left:23.5px;top:486px;" width="11" height="12" viewBox="0 0 11 12"><path d="M2 4.800q.5-3 3.500-3 1.800 0 3 1.500M9 7.200q-.5 3-3.500 3-1.800 0-3-1.500" fill="none" stroke="#afb1b3" stroke-width="1.400"/><path d="M10.300 1v3.400h-3.400zM.7 11v-3.400h3.400z" fill="#afb1b3"/></svg>
<div style="left:20px;top:505.3px;width:18px;height:1px;background:#4b4e50;"></div>
<div style="left:24.5px;top:515.3px;width:8.5px;height:8.5px;background:#5f6264;"></div>
<div style="left:20px;top:533.3px;width:18px;height:1px;background:#4b4e50;"></div>
<svg style="left:23px;top:542.8px;" width="12" height="9.5" viewBox="0 0 12 9.5"><rect x="0" y="5.500" width="12" height="4" fill="#b4b6b8"/><rect x="0" y="0" width="5.300" height="4.300" fill="#b4b6b8"/><rect x="6.700" y="0" width="5.300" height="4.300" fill="#b4b6b8"/></svg>
<div style="left:20px;top:561.5px;width:18px;height:1px;background:#4b4e50;"></div>
<svg style="left:21.5px;top:567.5px;" width="14" height="14" viewBox="0 0 14 14"><g transform="rotate(45 7 7)"><rect x="4.500" y="0" width="5" height="6" fill="#b4b6b8"/><rect x="2.700" y="5.600" width="8.600" height="2" fill="#b4b6b8"/><rect x="6.300" y="7.500" width="1.400" height="6.500" fill="#b4b6b8"/></g></svg>
<div style="left:42px;top:436px;width:1019px;height:22.5px;background:#3c3f41;"></div>
<svg style="left:49px;top:441px;" width="10.5" height="10" viewBox="0 0 10.5 10"><path d="M1 5.300l3 3.200 5.500-7" fill="none" stroke="#d0d2d4" stroke-width="2"/></svg>
<div style="left:66.700px;top:437.300px;width:18.300px;height:16.500px;border-radius:2px;background:#5a5e61;"></div>
<svg style="left:71px;top:440.5px;" width="10" height="10" viewBox="0 0 10 10"><circle cx="5" cy="5" r="4" fill="none" stroke="#d0d2d4" stroke-width="1.700"/><path d="M2.300 7.700l5.400-5.400" stroke="#d0d2d4" stroke-width="1.700"/></svg>
<div style="left:90px;top:439px;width:1px;height:16px;background:#4f5254;"></div>
<svg style="left:98px;top:440px;" width="12" height="12" viewBox="0 0 12 12"><path d="M2.800 0.500v9.500M0.300 7.500l2.500 3 2.500-3" fill="none" stroke="#c3c5c7" stroke-width="1.500"/><path d="M7 4.300l1.700-3.800 1.700 3.800M7.500 3.200h2.400M6.800 6.800h3.400l-3.400 4.200h3.600" fill="none" stroke="#c3c5c7" stroke-width="1"/></svg>
<svg style="left:120px;top:440px;" width="12" height="12" viewBox="0 0 12 12"><path d="M2.800 0.500v9.500M0.300 7.500l2.500 3 2.500-3" fill="none" stroke="#c3c5c7" stroke-width="1.500"/><path d="M6.500 1.800h5.500M6.500 5h4M6.500 8.200h2.500" stroke="#c3c5c7" stroke-width="1.500"/></svg>
<div style="left:139.4px;top:439px;width:1px;height:16px;background:#4f5254;"></div>
<svg style="left:148px;top:439.5px;" width="11" height="13" viewBox="0 0 11 13"><path d="M0 1h11M0 12h11" stroke="#c3c5c7" stroke-width="1.400"/><path d="M5.500 3l2.600 2.700h-5.200zM5.500 10l2.600-2.700h-5.200z" fill="#c3c5c7"/></svg>
<svg style="left:170px;top:439.5px;" width="11" height="13" viewBox="0 0 11 13"><path d="M0 6.500h11" stroke="#c3c5c7" stroke-width="1.400"/><path d="M5.500 4.800l2.600-3.300h-5.200zM5.500 8.200l2.600 3.300h-5.200z" fill="#c3c5c7"/></svg>
<div style="left:189px;top:439px;width:1px;height:16px;background:#4f5254;"></div>
<svg style="left:199.5px;top:440.5px;" width="8" height="11" viewBox="0 0 8 11"><path d="M4 1.500v9.500M0.800 4.500l3.200-3.500 3.200 3.500" fill="none" stroke="#5e6163" stroke-width="1.500"/></svg>
<span class="t" style="left:234px;top:439.40px;font-size:9.5px;line-height:12px;color:#909294;">»</span>
<svg style="left:248.89999999999998px;top:440.5px;" width="10.6" height="10.6" viewBox="0 0 10.6 10.6"><circle cx="5.3" cy="5.3" r="5.3" fill="#e8b23c"/><path d="M3.1999999999999997 3.1999999999999997l4.200 4.200M7.4 3.1999999999999997l-4.200 4.200" stroke="#3c3226" stroke-width="1.500" stroke-linecap="round"/></svg>
<span class="t" style="left:264.4px;top:439.20px;font-size:11.12px;line-height:14px;color:#a8aaac;letter-spacing:0.172px;"><span style="color:#e0605c">Tests failed: 1</span> of 1 test<span style="color:#8a8c8e"> – 12 ms</span></span>
<div style="left:42px;top:458.5px;width:203px;height:180.5px;background:#3c3f41;"></div>
<div style="left:42px;top:458.5px;width:201.5px;height:16px;background:#0d293e;"></div>
<svg style="left:47px;top:464.2px;" width="7.4" height="5.6" viewBox="0 0 7.4 5.6"><path d="M0 0h7.4l-3.7 5.6z" fill="#b0b2b4"/></svg>
<svg style="left:62.0px;top:461.1px;" width="11.0" height="11.0" viewBox="0 0 11.0 11.0"><circle cx="5.5" cy="5.5" r="5.5" fill="#e8b23c"/><path d="M3.4 3.4l4.200 4.200M7.6 3.4l-4.200 4.200" stroke="#3c3226" stroke-width="1.500" stroke-linecap="round"/></svg>
<span class="t" style="left:77px;top:459.60px;font-size:11.4px;line-height:15px;color:#d0d2d4;letter-spacing:0.083px;">Test Results</span>
<span class="t" style="left:218px;top:460.30px;font-size:8.65px;line-height:14px;color:#c8cacc;letter-spacing:0.187px;">12 ms</span>
<svg style="left:77.0px;top:476.9px;" width="11.0" height="11.0" viewBox="0 0 11.0 11.0"><circle cx="5.5" cy="5.5" r="5.5" fill="#e8b23c"/><path d="M3.4 3.4l4.200 4.200M7.6 3.4l-4.200 4.200" stroke="#3c3226" stroke-width="1.500" stroke-linecap="round"/></svg>
<span class="t" style="left:92.4px;top:474.90px;font-size:11.4px;line-height:15px;color:#c8cacc;letter-spacing:0.167px;">TestSliceOutOfBound</span>
<span class="t" style="left:218px;top:475.60px;font-size:8.65px;line-height:14px;color:#84868a;letter-spacing:0.187px;">12 ms</span>
<div style="left:245px;top:458.5px;width:793px;height:180.5px;background:#2b2b2b;"></div>
<div style="left:243.5px;top:458.5px;width:1.5px;height:180.5px;background:#323436;"></div>
<div style="left:245px;top:458.5px;width:793px;height:180.5px;overflow:hidden;"><div style="left:-245px;top:-458.5px;width:1080px;height:675px;">
<svg style="left:248px;top:463px;" width="7" height="7" viewBox="0 0 7 7"><rect x="0.500" y="0.500" width="6" height="6" fill="none" stroke="#606264" stroke-width=".8"/><path d="M2 3.500h3" stroke="#606264" stroke-width=".8"/></svg>
<div style="left:256px;top:460px;width:106px;height:12px;background:#3a3c3a;"></div>
<span class="t c" style="left:256.00px;top:460px;color:#c4c6c8;"><span style="color:#8a8c8e">&lt;4 go setup calls&gt;</span></span>
<span class="t c" style="left:256.00px;top:473px;color:#c4c6c8;">=== RUN   TestSliceOutOfBound</span>
<span class="t c" style="left:256.00px;top:486px;color:#c4c6c8;">--- FAIL: TestSliceOutOfBound (0.00s)</span>
<span class="t c" style="left:256.00px;top:498px;color:#c4c6c8;">    <span class="lnk">container_test.go:225</span>: s1 = [2 3 4 5], len(s1) = 4, cap(s1) = 6</span>
<span class="t c" style="left:256.00px;top:511px;color:#c4c6c8;">    <span class="lnk">container_test.go:229</span>: s2 = [5 6], len(s2) = 2, cap(s2) = 3</span>
<span class="t c" style="left:256.00px;top:524px;color:#c4c6c8;">    <span class="lnk">container_test.go:235</span>: [5 6 7]</span>
<span class="t c" style="left:256.00px;top:536px;color:#c4c6c8;">panic: runtime error: <span style="background:#3b4a3d">slice bounds out of range</span> [recovered]</span>
<span class="t c" style="left:256.00px;top:549px;color:#c4c6c8;">    panic: runtime error: <span style="background:#214283">slice bounds out of range</span></span>
<span class="t c" style="left:256.00px;top:574px;color:#c4c6c8;">goroutine 4 [running]:</span>
<span class="t c" style="left:256.00px;top:587px;color:#c4c6c8;">testing.tRunner.func1(0xc0000b0100)</span>
<span class="t c" style="left:256.00px;top:599px;color:#c4c6c8;">    <span class="lnk">/usr/local/go/src/testing/testing.go:830</span> +0x392</span>
<span class="t c" style="left:256.00px;top:612px;color:#c4c6c8;">panic(0x111b780, 0x12390e0)</span>
<span class="t c" style="left:256.00px;top:625px;color:#c4c6c8;">    <span class="lnk">/usr/local/go/src/runtime/panic.go:522</span> +0x1b5</span>
<span class="t c" style="left:256.00px;top:637px;color:#c4c6c8;">github.com/snowdreams1006/learn-go/container.TestSliceOutOfBound(0xc0000b0100)</span>
</div></div>
<div style="left:1038px;top:458.5px;width:23px;height:180.5px;background:#3c3f41;"></div>
<svg style="left:1043.6px;top:464px;" width="12" height="12" viewBox="0 0 12 12"><path d="M2 9.500l3-6 4 2.500-2 4.500z" fill="#5e6163"/><path d="M8 2v4M6 4h4" stroke="#5e6163" stroke-width="1.200"/><circle cx="3" cy="3" r="1" fill="#5e6163"/></svg>
<svg style="left:1044.6px;top:487px;" width="10" height="11" viewBox="0 0 10 11"><path d="M5 1.500v9M1 5.200l4-4 4 4" fill="none" stroke="#c3c5c7" stroke-width="1.500"/></svg>
<svg style="left:1044.6px;top:509px;" width="10" height="11" viewBox="0 0 10 11"><path d="M5 0.500v9M1 5.800l4 4 4-4" fill="none" stroke="#c3c5c7" stroke-width="1.500"/></svg>
<svg style="left:1043.6px;top:531px;" width="12" height="12" viewBox="0 0 12 12"><path d="M0.500 1.500h11M0.500 5.500h8.500q2.500 0 2.500 2.200t-2.500 2.200h-2.500M0.500 9.900h3" fill="none" stroke="#c3c5c7" stroke-width="1.400"/><path d="M7.500 7.500v4.800l-3-2.400z" fill="#c3c5c7"/></svg>
<svg style="left:1043.6px;top:552px;" width="12" height="12" viewBox="0 0 12 12"><path d="M0.500 2h5M0.500 5.500h5M0.500 11h11" stroke="#c3c5c7" stroke-width="1.400" fill="none"/><path d="M9 0.500v6.500M6.300 4.500l2.700 3 2.700-3" fill="none" stroke="#c3c5c7" stroke-width="1.400"/></svg>
<svg style="left:1043.6px;top:575px;" width="12" height="11" viewBox="0 0 12 11"><rect x="2.500" y="0" width="7" height="3" fill="#c3c5c7"/><rect x="0" y="3.800" width="12" height="4.700" rx=".8" fill="#c3c5c7"/><rect x="2.500" y="7" width="7" height="4" fill="#c3c5c7" stroke="#3c3f41" stroke-width=".8"/></svg>
<svg style="left:1044.6px;top:596.5px;" width="10" height="12" viewBox="0 0 10 12"><rect x="0.500" y="1.500" width="9" height="1.700" fill="#c3c5c7"/><rect x="3.300" y="0" width="3.400" height="2" fill="#c3c5c7"/><path d="M1.300 4h7.400v7q0 1-1 1h-5.400q-1 0-1-1z" fill="#c3c5c7"/></svg>
<div style="left:0px;top:639px;width:1080px;height:18.5px;background:#3c3f41;"></div>
<div style="left:0px;top:639px;width:1080px;height:1px;background:#393b3d;"></div>
<div style="left:16px;top:640.3px;width:57px;height:16.2px;background:#2c2e2f;"></div>
<svg style="left:25.7px;top:644.5px;" width="7" height="8.5" viewBox="0 0 7 8.5"><path d="M0.300 0.300l6.400 4-6.400 4z" fill="#c3c5c7"/></svg>
<span class="t" style="left:38.75px;top:641.60px;font-size:9.01px;line-height:14px;color:#d4d6d8;letter-spacing:0.172px;"><u>4</u>: Run</span>
<svg style="left:83.5px;top:643.5px;" width="10" height="10" viewBox="0 0 10 10"><g fill="#b4b6b8"><ellipse cx="5" cy="6" rx="2.900" ry="3.700"/><path d="M3 2.600q2-2.200 4 0z"/></g><path d="M0.300 6h9.400M1 2.800l2 1.600M9 2.800l-2 1.600M1 9.500l2-1.600M9 9.500l-2-1.600" stroke="#b4b6b8" stroke-width="1" fill="none"/></svg>
<span class="t" style="left:97px;top:641.60px;font-size:9.33px;line-height:14px;color:#bbbdbf;letter-spacing:0.183px;"><u>5</u>: Debug</span>
<svg style="left:155.5px;top:644.5px;" width="10" height="8" viewBox="0 0 10 8"><g fill="#b4b6b8"><rect x="0" y="0" width="1.800" height="1.800"/><rect x="3" y="0" width="7" height="1.800"/><rect x="0" y="3.100" width="1.800" height="1.800"/><rect x="3" y="3.100" width="7" height="1.800"/><rect x="0" y="6.200" width="1.800" height="1.800"/><rect x="3" y="6.200" width="7" height="1.800"/></g></svg>
<span class="t" style="left:168.75px;top:641.60px;font-size:9.13px;line-height:14px;color:#bbbdbf;letter-spacing:0.199px;"><u>6</u>: TODO</span>
<svg style="left:224px;top:644px;" width="10" height="9.5" viewBox="0 0 10 9.5"><rect x="0" y="0" width="10" height="9.500" rx="1" fill="#b4b6b8"/><path d="M2 2.500l2.500 2.200-2.500 2.200M5.500 7.200h3" fill="none" stroke="#3c3f41" stroke-width="1.100"/></svg>
<span class="t" style="left:238.25px;top:641.60px;font-size:9.51px;line-height:14px;color:#bbbdbf;letter-spacing:0.174px;">Terminal</span>
<svg style="left:294.2px;top:644px;" width="10" height="9" viewBox="0 0 10 9"><path d="M5 0.300l4.800 8.500h-9.600z" fill="#b4b6b8"/><path d="M5 3.300v2.800M5 6.900v1" stroke="#3c3f41" stroke-width="1.100"/></svg>
<span class="t" style="left:308px;top:641.60px;font-size:9.31px;line-height:14px;color:#bbbdbf;letter-spacing:0.189px;">Problems</span>
<svg style="left:370px;top:644px;" width="9" height="10" viewBox="0 0 9 10"><path d="M1.500 0v10M1.500 6.500h3q2 0 2-2v-2.500" fill="none" stroke="#b4b6b8" stroke-width="1.400"/><path d="M4 3l2.500-2.800 2.500 2.800z" fill="#b4b6b8"/></svg>
<span class="t" style="left:383px;top:641.60px;font-size:9.29px;line-height:14px;color:#bbbdbf;letter-spacing:0.151px;"><u>9</u>: Version Control</span>
<svg style="left:894.5px;top:643.5px;" width="11.5" height="10.5" viewBox="0 0 11.5 10.5"><path d="M5.800 0.700q4.900 0 4.900 4.500v4.600h-4.900q-4.900 0-4.900-4.600t4.900-4.500z" fill="none" stroke="#b4b6b8" stroke-width="1.300"/></svg>
<span class="t" style="left:909.25px;top:641.60px;font-size:9.0px;line-height:14px;color:#bbbdbf;letter-spacing:0.172px;">Event Log</span>
<svg style="left:971px;top:643px;" width="12" height="12" viewBox="0 0 12 12"><path d="M10.500 0.500q-5 .5-7.500 4l-2.500.8 2.500 1.400 1 1.300 1.200 2.300 1.200-2.500q3.500-2.800 4.100-7.300z" fill="#62b543"/><rect x="6" y="7" width="6" height="5" fill="#3c3f41"/><path d="M7 7.800v3.400M8.300 7.800h1.600v1.500h-1.600v2M10.300 11.200l-.9-1.900" stroke="#e6e6e6" stroke-width=".8" fill="none"/></svg>
<span class="t" style="left:984.5px;top:641.60px;font-size:9.12px;line-height:14px;color:#bbbdbf;letter-spacing:0.174px;">JRebel Console</span>
<div style="left:0px;top:657.5px;width:1080px;height:17.5px;background:#3c3f41;"></div>
<div style="left:0px;top:657px;width:1080px;height:1px;background:#3a3d3f;"></div>
<svg style="left:3.7px;top:661px;" width="10.5" height="10.5" viewBox="0 0 10.5 10.5"><rect x="2.500" y="0.600" width="7.400" height="7.400" fill="none" stroke="#a4a6a8" stroke-width="1.100"/><path d="M0.600 2.500v7.400h7.400" fill="none" stroke="#a4a6a8" stroke-width="1.100"/></svg>
<span class="t" style="left:25.75px;top:659.90px;font-size:9.44px;line-height:14px;color:#bbbdbf;letter-spacing:0.158px;">Tests failed: 1, passed: 0 (moments ago)</span>
<span class="t" style="left:761.25px;top:659.90px;font-size:9.23px;line-height:14px;color:#bbbdbf;letter-spacing:0.184px;">237:19</span>
<span class="t" style="left:800px;top:659.90px;font-size:9.51px;line-height:14px;color:#bbbdbf;letter-spacing:0.267px;">LF</span>
<svg style="left:814.2px;top:662.6px;" width="5" height="9" viewBox="0 0 5 9"><path d="M0 3.600l2.500-3.100 2.500 3.100zM0 5.400l2.500 3.100 2.500-3.100z" fill="#9da0a2"/></svg>
<span class="t" style="left:830.5px;top:659.90px;font-size:9.19px;line-height:14px;color:#8c8e90;letter-spacing:0.212px;">UTF-8</span>
<span class="t" style="left:868px;top:659.90px;font-size:9.43px;line-height:14px;color:#bbbdbf;letter-spacing:0.218px;">Tab</span>
<svg style="left:888.2px;top:662.6px;" width="5" height="9" viewBox="0 0 5 9"><path d="M0 3.600l2.500-3.100 2.500 3.100zM0 5.400l2.500 3.100 2.500-3.100z" fill="#9da0a2"/></svg>
<span class="t" style="left:905px;top:659.90px;font-size:9.47px;line-height:14px;color:#bbbdbf;letter-spacing:0.161px;">Git: master</span>
<svg style="left:956.7px;top:662.6px;" width="5" height="9" viewBox="0 0 5 9"><path d="M0 3.600l2.500-3.100 2.500 3.100zM0 5.400l2.500 3.100 2.500-3.100z" fill="#9da0a2"/></svg>
<svg style="left:970px;top:660.5px;" width="10.5" height="11" viewBox="0 0 10.5 11"><rect x="3" y="5.500" width="7" height="5.300" rx=".6" fill="#c3c5c7"/><path d="M1 5.500v-2.500q0-2.300 2.200-2.300t2.200 2.300v2.500" fill="none" stroke="#c3c5c7" stroke-width="1.300"/></svg>
<svg style="left:991px;top:660.5px;" width="12" height="11" viewBox="0 0 12 11"><path d="M3 0.500h6l1 4h-8z" fill="#b4b6b8"/><rect x="0" y="4" width="12" height="1.600" rx=".5" fill="#b4b6b8"/><path d="M1.500 6.300h9q0 4.500-4.500 4.500t-4.500-4.500z" fill="#b4b6b8"/><circle cx="4.200" cy="7.800" r="1.100" fill="#3c3f41"/><circle cx="7.800" cy="7.800" r="1.100" fill="#3c3f41"/></svg>
<div style="left:1007px;top:657.3px;width:12.2px;height:17.7px;background:#606264;"></div>
<span class="t" style="left:1008.75px;top:659.90px;font-size:9.54px;line-height:14px;color:#bbbdbf;letter-spacing:0.186px;">356 of 2014M</span>
<div style="left:0px;top:673.6px;width:1080px;height:1.4px;background:#47494b;"></div>
<div style="left:1077.8px;top:21px;width:2.2px;height:654px;background:#58595b;"></div>
</div></body></html>
